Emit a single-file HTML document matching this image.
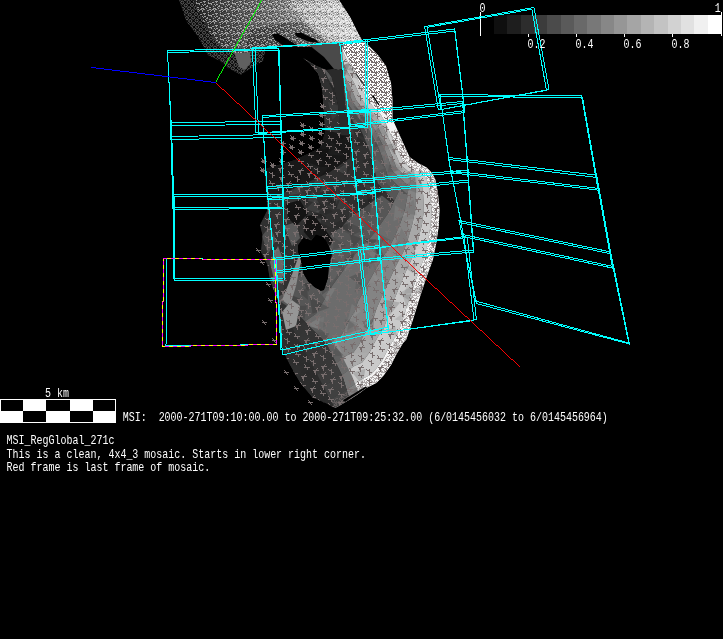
<!DOCTYPE html>
<html><head><meta charset="utf-8"><title>MSI_RegGlobal_271c</title>
<style>
html,body{margin:0;padding:0;background:#000;}
body{width:723px;height:639px;overflow:hidden;}
svg{display:block;}
.t{font-family:"Liberation Mono","DejaVu Sans Mono",monospace;font-size:10px;fill:#fff;white-space:pre;}
</style></head><body>
<svg width="723" height="639" viewBox="0 0 723 639">
<rect width="723" height="639" fill="#000"/>
<g id="asteroid">
<defs>
<pattern id="dotsd" width="4.5" height="4.5" patternUnits="userSpaceOnUse" patternTransform="rotate(40)">
<path d="M0.5 0.5h2.6v2.6h-2.6z" fill="none" stroke="#7c7c7c" stroke-width="0.9"/>
</pattern>
<linearGradient id="gtop" gradientUnits="userSpaceOnUse" x1="195" y1="32" x2="345" y2="8">
<stop offset="0" stop-color="#1e1e1e"/><stop offset="0.14" stop-color="#3c3c3c"/><stop offset="0.32" stop-color="#5a5a5a"/><stop offset="0.55" stop-color="#747474"/><stop offset="0.75" stop-color="#a2a2a2"/><stop offset="1" stop-color="#cccccc"/>
</linearGradient>
<pattern id="pw" width="10" height="10" patternUnits="userSpaceOnUse" shape-rendering="crispEdges"><path d="M3 5h1v1h-1zM4 1h1v1h-1zM4 5h1v1h-1zM0 4h1v1h-1zM7 6h1v1h-1zM1 2h1v1h-1zM0 0h1v1h-1zM6 4h1v1h-1zM4 2h1v1h-1zM1 1h1v1h-1zM8 1h1v1h-1zM3 9h1v1h-1zM0 7h1v1h-1zM4 8h1v1h-1zM7 8h1v1h-1zM1 5h1v1h-1zM5 3h1v1h-1zM6 2h1v1h-1zM0 9h1v1h-1zM5 2h1v1h-1zM6 8h1v1h-1zM5 5h1v1h-1zM6 3h1v1h-1zM6 5h1v1h-1zM6 1h1v1h-1zM6 7h1v1h-1zM9 5h1v1h-1zM1 8h1v1h-1zM5 8h1v1h-1zM8 6h1v1h-1zM9 9h1v1h-1zM9 2h1v1h-1zM1 0h1v1h-1zM1 7h1v1h-1zM7 2h1v1h-1zM2 1h1v1h-1zM1 4h1v1h-1zM4 4h1v1h-1zM3 7h1v1h-1zM9 1h1v1h-1zM2 2h1v1h-1zM5 9h1v1h-1zM8 3h1v1h-1zM3 2h1v1h-1zM2 6h1v1h-1zM9 8h1v1h-1zM4 0h1v1h-1zM2 7h1v1h-1z" fill="#786e6e" opacity="1"/></pattern>
<pattern id="pn" width="12" height="12" patternUnits="userSpaceOnUse" shape-rendering="crispEdges"><path d="M4 2h1v1h-1zM11 8h1v1h-1zM6 11h1v1h-1zM7 3h1v1h-1zM4 3h1v1h-1zM10 4h1v1h-1zM7 4h1v1h-1zM9 2h1v1h-1zM10 11h1v1h-1zM2 8h1v1h-1zM1 4h1v1h-1zM3 5h1v1h-1zM10 8h1v1h-1zM2 6h1v1h-1zM8 9h1v1h-1zM8 2h1v1h-1zM3 10h1v1h-1zM4 0h1v1h-1zM5 3h1v1h-1zM9 8h1v1h-1zM1 7h1v1h-1zM1 1h1v1h-1zM9 9h1v1h-1zM0 4h1v1h-1zM11 9h1v1h-1zM0 9h1v1h-1zM5 9h1v1h-1zM10 10h1v1h-1zM6 3h1v1h-1zM3 6h1v1h-1zM11 5h1v1h-1zM7 10h1v1h-1zM11 1h1v1h-1zM6 9h1v1h-1zM0 2h1v1h-1zM0 1h1v1h-1zM6 7h1v1h-1zM5 7h1v1h-1zM4 10h1v1h-1zM9 6h1v1h-1z" fill="#fff" opacity="0.5"/><path d="M0 7h1v1h-1zM11 0h1v1h-1zM6 6h1v1h-1zM9 11h1v1h-1zM7 6h1v1h-1zM1 2h1v1h-1zM3 9h1v1h-1zM11 7h1v1h-1zM0 6h1v1h-1zM4 5h1v1h-1zM1 0h1v1h-1zM6 0h1v1h-1zM5 1h1v1h-1zM9 3h1v1h-1zM7 7h1v1h-1zM8 11h1v1h-1zM10 5h1v1h-1zM8 3h1v1h-1zM7 11h1v1h-1zM11 4h1v1h-1zM2 4h1v1h-1zM5 2h1v1h-1zM3 4h1v1h-1zM5 11h1v1h-1zM7 2h1v1h-1zM0 8h1v1h-1zM2 1h1v1h-1zM1 6h1v1h-1zM8 8h1v1h-1zM8 1h1v1h-1z" fill="#000" opacity="0.35"/></pattern>
<pattern id="pn2" width="12" height="12" patternUnits="userSpaceOnUse" shape-rendering="crispEdges"><path d="M11 1h1v1h-1zM11 10h1v1h-1zM5 0h1v1h-1zM4 10h1v1h-1zM8 3h1v1h-1zM3 0h1v1h-1zM0 10h1v1h-1zM9 5h1v1h-1zM0 7h1v1h-1zM11 11h1v1h-1zM7 9h1v1h-1zM1 4h1v1h-1zM7 1h1v1h-1zM9 6h1v1h-1zM3 11h1v1h-1zM2 5h1v1h-1zM7 4h1v1h-1zM10 11h1v1h-1zM11 7h1v1h-1zM6 0h1v1h-1zM9 4h1v1h-1zM6 4h1v1h-1zM10 8h1v1h-1zM5 11h1v1h-1zM11 5h1v1h-1zM8 1h1v1h-1zM5 3h1v1h-1zM1 1h1v1h-1zM5 8h1v1h-1zM1 10h1v1h-1zM11 8h1v1h-1zM2 6h1v1h-1zM3 8h1v1h-1zM9 7h1v1h-1zM0 4h1v1h-1zM4 3h1v1h-1zM8 8h1v1h-1zM3 4h1v1h-1zM9 8h1v1h-1zM7 8h1v1h-1zM5 10h1v1h-1zM0 6h1v1h-1zM7 10h1v1h-1zM10 6h1v1h-1zM2 3h1v1h-1zM6 8h1v1h-1zM7 6h1v1h-1zM10 3h1v1h-1zM3 7h1v1h-1zM0 8h1v1h-1zM1 6h1v1h-1zM4 5h1v1h-1zM2 9h1v1h-1zM11 4h1v1h-1zM1 11h1v1h-1zM1 7h1v1h-1zM4 11h1v1h-1zM6 2h1v1h-1zM9 11h1v1h-1zM4 9h1v1h-1z" fill="#fff" opacity="0.8"/><path d="M2 11h1v1h-1zM6 7h1v1h-1zM3 5h1v1h-1zM0 2h1v1h-1zM1 9h1v1h-1zM9 1h1v1h-1zM0 1h1v1h-1zM11 9h1v1h-1zM2 2h1v1h-1zM1 5h1v1h-1z" fill="#000" opacity="0.3"/></pattern>
<clipPath id="cb"><polygon points="326.6,403.5 312.5,397.5 300.0,382.5 290.0,365.0 282.5,350.0 280.0,325.0 277.5,300.0 270.0,280.0 267.5,265.0 261.0,252.0 262.5,235.0 260.0,225.0 267.5,210.0 265.0,175.0 262.0,170.0 295.0,160.0 320.0,148.0 325.0,133.0 350.0,136.0 345.3,105.0 343.0,70.0 342.0,46.0 344.0,50.0 351.0,64.0 359.0,77.7 364.7,91.5 373.0,102.6 380.0,109.5 389.8,118.0 392.5,119.0 397.0,129.0 401.0,138.0 405.5,148.0 409.6,157.0 418.0,163.0 426.8,167.5 432.0,173.0 435.4,179.5 438.0,193.0 439.6,210.0 438.8,226.4 436.3,243.0 433.0,259.6 426.3,278.0 419.7,298.0 413.0,319.7 406.4,339.6 403.0,343.2 396.3,354.8 391.3,364.8 383.0,376.4 376.4,383.0 366.4,388.0 359.8,393.0 349.8,399.6 339.9,405.4 335.0,408.0"/><polygon points="303.0,58.0 309.5,63.0 318.3,73.7 321.2,84.4 322.7,92.0 323.2,105.3 324.6,116.4 325.0,133.0 332.0,134.0 331.5,116.0 330.0,105.0 329.0,92.0 327.5,80.0 323.0,71.0 316.4,66.0"/><polygon points="316.4,66.0 323.0,71.0 327.5,80.0 329.0,92.0 330.0,105.0 331.5,116.0 332.0,134.0 340.5,135.0 339.0,120.0 337.7,105.0 334.5,90.0 331.5,77.0 326.0,70.0"/></clipPath>
</defs>
<polygon points="179.0,0.0 186.6,21.6 198.0,36.5 208.0,55.0 220.0,61.0 228.0,68.0 241.0,74.7 248.0,70.0 263.0,61.0 266.0,46.5 271.0,38.0 290.0,40.0 290.0,30.0 200.0,0.0" fill="url(#dotsd)" opacity="0.8"/>
<polygon points="193.0,0.0 339.0,0.0 350.0,17.0 358.0,33.0 362.0,40.0 345.0,44.0 330.0,45.0 318.0,46.0 300.0,47.0 285.0,47.0 272.0,46.0 266.0,47.0 258.0,50.0 245.0,53.0 232.0,53.0 224.0,49.0 216.0,42.0 208.0,30.0 200.0,15.0 193.0,0.0" fill="url(#gtop)"/>
<polygon points="234.0,52.0 250.0,51.0 251.0,62.0 245.0,70.0 239.0,67.0" fill="rgb(96,96,96)"/>
<polygon points="250.0,30.0 300.0,20.0 330.0,44.0 300.0,47.0 272.0,46.0 258.0,50.0 245.0,53.0" fill="#000" opacity="0.3"/>
<polygon points="193.0,0.0 339.0,0.0 350.0,17.0 358.0,33.0 362.0,40.0 345.0,44.0 330.0,45.0 318.0,46.0 300.0,47.0 285.0,47.0 272.0,46.0 266.0,47.0 258.0,50.0 245.0,53.0 232.0,53.0 224.0,49.0 216.0,42.0 208.0,30.0 200.0,15.0 193.0,0.0" fill="url(#pn)"/>
<polygon points="285.0,0.0 339.0,0.0 350.0,17.0 358.0,33.0 362.0,40.0 345.0,44.0 330.0,38.0 310.0,25.0 295.0,12.0" fill="url(#pn2)" opacity="0.7"/>
<polygon points="294.3,33.2 301.0,32.5 316.4,40.0 319.0,43.0 308.0,41.5 297.0,36.7" fill="#000"/>
<polygon points="272.0,34.6 277.7,33.2 295.6,44.3 297.0,47.0 283.0,45.6 275.0,40.0" fill="#000"/>
<polygon points="309.5,45.0 316.0,43.5 343.0,43.0 343.0,69.0 338.0,70.0 333.8,68.8 324.0,57.0 314.0,49.0" fill="rgb(74,74,74)"/>
<polygon points="303.0,58.0 309.5,63.0 318.3,73.7 321.2,84.4 322.7,92.0 323.2,105.3 324.6,116.4 325.0,133.0 332.0,134.0 331.5,116.0 330.0,105.0 329.0,92.0 327.5,80.0 323.0,71.0 316.4,66.0" fill="rgb(104,104,104)"/>
<polygon points="316.4,66.0 323.0,71.0 327.5,80.0 329.0,92.0 330.0,105.0 331.5,116.0 332.0,134.0 340.5,135.0 339.0,120.0 337.7,105.0 334.5,90.0 331.5,77.0 326.0,70.0" fill="rgb(78,78,78)"/>
<polygon points="326.0,70.0 331.5,77.0 334.5,90.0 337.7,105.0 339.0,120.0 340.5,135.0 350.0,136.0 345.3,105.0 343.0,70.0 338.0,70.0 333.8,68.8" fill="rgb(42,42,42)"/>
<g clip-path="url(#cb)">
<polygon points="326.6,403.5 312.5,397.5 300.0,382.5 290.0,365.0 282.5,350.0 280.0,325.0 277.5,300.0 270.0,280.0 267.5,265.0 261.0,252.0 262.5,235.0 260.0,225.0 267.5,210.0 265.0,175.0 262.0,170.0 295.0,160.0 320.0,148.0 325.0,133.0 350.0,136.0 345.3,105.0 343.0,70.0 342.0,46.0 344.0,50.0 351.0,64.0 359.0,77.7 364.7,91.5 373.0,102.6 380.0,109.5 389.8,118.0 392.5,119.0 397.0,129.0 401.0,138.0 405.5,148.0 409.6,157.0 418.0,163.0 426.8,167.5 432.0,173.0 435.4,179.5 438.0,193.0 439.6,210.0 438.8,226.4 436.3,243.0 433.0,259.6 426.3,278.0 419.7,298.0 413.0,319.7 406.4,339.6 403.0,343.2 396.3,354.8 391.3,364.8 383.0,376.4 376.4,383.0 366.4,388.0 359.8,393.0 349.8,399.6 339.9,405.4 335.0,408.0" fill="rgb(46,46,46)"/>
<polygon points="314.9,47.1 320.7,63.0 329.0,79.7 336.6,92.7 343.2,107.7 354.6,123.8 360.6,129.6 362.8,134.3 366.3,142.7 370.1,151.8 372.9,162.8 377.9,183.4 394.7,201.2 399.2,206.2 390.7,202.6 382.0,195.5 371.8,202.1 358.7,211.9 349.9,217.5 342.1,226.5 334.9,231.6 323.3,242.3 308.6,262.6 294.0,281.7 291.4,290.7 298.9,274.0 286.4,295.3 284.9,299.3 286.3,297.2 304.8,280.5 301.9,280.9 288.2,290.5 283.7,293.5 278.2,296.7 276.4,297.6 194.4,143.0 191.8,144.5 191.1,145.0 188.0,147.1 211.6,131.0 204.6,137.1 150.9,186.4 135.8,207.5 132.5,211.9 153.1,177.2 130.4,222.1 127.2,228.3 133.9,206.8 142.8,179.8 144.5,177.2 140.8,191.4 140.3,196.5 139.7,217.2 140.8,233.9 148.1,265.7 188.2,347.8 252.4,411.6 261.7,419.1 179.1,349.1 132.2,271.7 127.2,260.5 123.2,251.5 125.6,255.9 148.4,291.4 149.5,294.7 110.5,238.5 98.7,213.8 94.2,206.9 75.3,168.2 63.5,136.9" fill="rgb(48,48,48)"/>
<polygon points="320.6,45.1 326.2,60.6 334.3,76.9 341.9,89.9 348.5,104.7 359.4,119.8 366.0,125.5 369.6,130.7 374.1,139.2 378.7,148.0 382.5,158.4 387.5,175.4 401.7,189.6 407.6,194.4 403.4,193.5 399.2,190.4 395.2,198.9 389.6,211.2 383.0,220.8 375.1,232.3 367.5,240.9 355.6,253.5 341.5,273.1 327.4,292.3 323.6,304.4 328.0,293.4 317.2,311.9 314.7,317.6 313.4,319.4 324.8,309.2 320.0,310.9 308.2,319.2 302.2,323.2 295.5,327.1 292.8,328.5 276.4,297.6 278.2,296.7 283.7,293.5 288.2,290.5 301.9,280.9 304.8,280.5 286.3,297.2 284.9,299.3 286.4,295.3 298.9,274.0 291.4,290.7 294.0,281.7 308.6,262.6 323.3,242.3 334.9,231.6 342.1,226.5 349.9,217.5 358.7,211.9 371.8,202.1 382.0,195.5 390.7,202.6 399.2,206.2 394.7,201.2 377.9,183.4 372.9,162.8 370.1,151.8 366.3,142.7 362.8,134.3 360.6,129.6 354.6,123.8 343.2,107.7 336.6,92.7 329.0,79.7 320.7,63.0 314.9,47.1" fill="rgb(86,86,86)"/>
<polygon points="325.3,43.4 330.8,58.7 338.7,74.5 346.4,87.7 352.8,102.3 363.2,116.6 370.0,122.5 374.1,128.5 378.7,137.2 383.2,145.9 387.5,156.2 392.5,171.2 405.6,183.3 412.3,187.8 410.5,188.4 408.6,187.5 407.2,197.2 404.7,210.8 400.6,222.6 395.1,235.8 389.4,247.1 379.8,261.9 368.8,281.8 357.8,302.1 353.0,316.9 354.7,311.1 345.3,327.2 341.9,334.4 338.1,339.7 343.2,335.5 336.5,338.3 326.6,345.5 319.1,350.4 311.3,355.0 307.8,356.8 292.8,328.5 295.5,327.1 302.2,323.2 308.2,319.2 320.0,310.9 324.8,309.2 313.4,319.4 314.7,317.6 317.2,311.9 328.0,293.4 323.6,304.4 327.4,292.3 341.5,273.1 355.6,253.5 367.5,240.9 375.1,232.3 383.0,220.8 389.6,211.2 395.2,198.9 399.2,190.4 403.4,193.5 407.6,194.4 401.7,189.6 387.5,175.4 382.5,158.4 378.7,148.0 374.1,139.2 369.6,130.7 366.0,125.5 359.4,119.8 348.5,104.7 341.9,89.9 334.3,76.9 326.2,60.6 320.6,45.1" fill="rgb(108,108,108)"/>
<polygon points="329.0,42.1 334.5,57.1 342.2,72.6 350.0,85.9 356.3,100.3 366.3,114.0 373.2,120.0 377.6,126.6 382.3,135.6 386.9,144.3 391.4,154.4 396.5,167.9 408.6,178.4 415.9,182.8 416.0,184.5 415.7,185.4 416.0,196.0 415.2,210.6 412.5,223.8 408.3,238.1 403.7,251.2 395.3,267.3 386.1,287.3 376.8,308.1 371.4,324.7 371.4,322.2 362.9,336.7 358.9,344.9 353.6,352.3 354.6,351.9 346.8,355.4 338.0,361.9 329.7,367.3 321.1,372.4 317.2,374.4 307.8,356.8 311.3,355.0 319.1,350.4 326.6,345.5 336.5,338.3 343.2,335.5 338.1,339.7 341.9,334.4 345.3,327.2 354.7,311.1 353.0,316.9 357.8,302.1 368.8,281.8 379.8,261.9 389.4,247.1 395.1,235.8 400.6,222.6 404.7,210.8 407.2,197.2 408.6,187.5 410.5,188.4 412.3,187.8 405.6,183.3 392.5,171.2 387.5,156.2 383.2,145.9 378.7,137.2 374.1,128.5 370.0,122.5 363.2,116.6 352.8,102.3 346.4,87.7 338.7,74.5 330.8,58.7 325.3,43.4" fill="rgb(132,132,132)"/>
<polygon points="333.8,40.4 339.1,55.1 346.6,70.2 354.4,83.6 360.7,97.9 370.1,110.8 377.0,117.1 381.7,124.5 386.3,133.8 390.7,142.6 395.2,152.7 400.2,164.8 411.3,173.9 419.1,178.3 420.8,181.0 421.8,183.6 423.2,195.0 423.9,210.4 421.9,224.7 418.2,239.8 413.9,254.2 406.1,271.0 397.7,291.0 389.2,312.1 383.4,329.8 382.2,329.4 374.3,342.9 370.0,351.7 363.7,360.6 362.1,362.5 353.5,366.6 345.5,372.5 336.6,378.4 327.6,383.7 323.3,385.9 317.2,374.4 321.1,372.4 329.7,367.3 338.0,361.9 346.8,355.4 354.6,351.9 353.6,352.3 358.9,344.9 362.9,336.7 371.4,322.2 371.4,324.7 376.8,308.1 386.1,287.3 395.3,267.3 403.7,251.2 408.3,238.1 412.5,223.8 415.2,210.6 416.0,196.0 415.7,185.4 416.0,184.5 415.9,182.8 408.6,178.4 396.5,167.9 391.4,154.4 386.9,144.3 382.3,135.6 377.6,126.6 373.2,120.0 366.3,114.0 356.3,100.3 350.0,85.9 342.2,72.6 334.5,57.1 329.0,42.1" fill="rgb(168,168,168)"/>
<polygon points="338.5,38.7 343.6,53.2 351.0,67.8 358.9,81.3 365.0,95.4 373.9,107.7 380.6,114.3 385.4,122.7 389.7,132.3 393.7,141.3 398.2,151.3 403.5,162.1 413.8,169.8 422.2,174.0 425.5,177.7 427.7,181.8 430.1,194.1 431.6,210.2 430.6,225.6 427.9,241.5 424.5,257.2 417.6,275.0 410.6,295.1 403.5,316.7 397.2,335.7 394.7,337.7 387.5,350.0 382.8,359.6 375.3,370.1 370.7,374.8 361.2,379.4 354.1,384.8 344.5,391.1 335.0,396.7 330.3,399.2 323.3,385.9 327.6,383.7 336.6,378.4 345.5,372.5 353.5,366.6 362.1,362.5 363.7,360.6 370.0,351.7 374.3,342.9 382.2,329.4 383.4,329.8 389.2,312.1 397.7,291.0 406.1,271.0 413.9,254.2 418.2,239.8 421.9,224.7 423.9,210.4 423.2,195.0 421.8,183.6 420.8,181.0 419.1,178.3 411.3,173.9 400.2,164.8 395.2,152.7 390.7,142.6 386.3,133.8 381.7,124.5 377.0,117.1 370.1,110.8 360.7,97.9 354.4,83.6 346.6,70.2 339.1,55.1 333.8,40.4" fill="rgb(202,202,202)"/>
<polygon points="346.5,35.8 351.5,49.8 358.4,63.8 366.4,77.5 372.4,91.3 380.4,102.3 387.4,109.2 392.9,118.8 397.5,128.8 401.5,137.8 406.0,147.8 410.0,156.7 418.3,162.6 427.1,167.1 432.4,172.7 435.9,179.4 438.5,192.9 440.1,210.0 439.3,226.4 436.8,243.1 433.5,259.7 426.8,278.2 420.2,298.2 413.5,319.9 406.9,339.8 403.4,343.5 396.7,355.0 391.7,365.1 383.4,376.7 376.7,383.4 366.7,388.4 360.1,393.4 350.1,400.0 340.1,405.8 335.2,408.4 330.3,399.2 335.0,396.7 344.5,391.1 354.1,384.8 361.2,379.4 370.7,374.8 375.3,370.1 382.8,359.6 387.5,350.0 394.7,337.7 397.2,335.7 403.5,316.7 410.6,295.1 417.6,275.0 424.5,257.2 427.9,241.5 430.6,225.6 431.6,210.2 430.1,194.1 427.7,181.8 425.5,177.7 422.2,174.0 413.8,169.8 403.5,162.1 398.2,151.3 393.7,141.3 389.7,132.3 385.4,122.7 380.6,114.3 373.9,107.7 365.0,95.4 358.9,81.3 351.0,67.8 343.6,53.2 338.5,38.7" fill="rgb(243,243,243)"/>
<polygon points="329.9,257.5 340.9,245.8 346.6,265.2" fill="#fff" opacity="0.05"/>
<polygon points="282.0,349.0 267.0,349.4 269.7,335.8" fill="#000" opacity="0.06"/>
<polygon points="286.7,144.4 294.5,139.0 296.8,149.7" fill="#fff" opacity="0.05"/>
<polygon points="435.5,399.5 449.7,407.6 431.0,416.3" fill="#000" opacity="0.11"/>
<polygon points="431.9,362.3 427.6,355.4 435.0,352.8" fill="#000" opacity="0.09"/>
<polygon points="271.1,165.7 284.3,178.8 263.3,183.6" fill="#000" opacity="0.12"/>
<polygon points="287.2,311.2 298.9,314.0 288.1,321.6" fill="#fff" opacity="0.08"/>
<polygon points="287.7,188.1 305.9,194.5 290.7,208.0" fill="#fff" opacity="0.03"/>
<polygon points="268.2,259.9 281.6,261.0 273.2,270.6" fill="#fff" opacity="0.04"/>
<polygon points="424.7,353.5 416.1,342.7 429.3,340.9" fill="#fff" opacity="0.04"/>
<polygon points="261.7,389.7 271.9,397.5 261.6,401.2" fill="#fff" opacity="0.04"/>
<polygon points="355.3,367.4 351.2,353.8 368.2,352.6" fill="#fff" opacity="0.05"/>
<polygon points="369.6,101.9 362.2,113.8 354.3,106.1" fill="#fff" opacity="0.08"/>
<polygon points="381.5,391.7 391.3,398.2 385.6,402.7" fill="#000" opacity="0.19"/>
<polygon points="400.1,302.5 389.1,315.9 383.2,299.5" fill="#000" opacity="0.14"/>
<polygon points="363.4,187.5 380.7,193.3 368.8,202.7" fill="#000" opacity="0.14"/>
<polygon points="335.8,347.0 343.8,355.4 332.2,356.6" fill="#000" opacity="0.19"/>
<polygon points="299.8,58.3 311.5,65.4 300.6,68.6" fill="#fff" opacity="0.07"/>
<polygon points="303.9,204.9 293.6,220.7 284.3,206.0" fill="#000" opacity="0.18"/>
<polygon points="391.3,398.2 380.2,392.9 391.8,386.1" fill="#fff" opacity="0.08"/>
<polygon points="442.3,217.3 431.8,222.9 433.8,212.0" fill="#fff" opacity="0.04"/>
<polygon points="344.4,77.8 332.1,64.7 349.7,64.0" fill="#000" opacity="0.19"/>
<polygon points="388.8,137.2 374.5,131.3 386.0,122.3" fill="#000" opacity="0.13"/>
<polygon points="374.3,316.7 373.2,331.2 363.1,327.0" fill="#000" opacity="0.19"/>
<polygon points="332.9,249.1 332.7,264.8 316.2,258.8" fill="#000" opacity="0.16"/>
<polygon points="307.7,376.0 294.3,383.3 292.8,367.3" fill="#fff" opacity="0.06"/>
<polygon points="365.8,327.5 351.3,336.5 354.3,320.5" fill="#fff" opacity="0.04"/>
<polygon points="351.8,303.8 361.0,311.3 347.6,321.1" fill="#fff" opacity="0.07"/>
<polygon points="364.3,240.1 383.7,239.5 378.1,253.1" fill="#000" opacity="0.13"/>
<polygon points="353.7,133.4 369.2,123.0 367.1,138.7" fill="#000" opacity="0.12"/>
<polygon points="375.2,84.8 382.0,74.4 392.3,86.9" fill="#000" opacity="0.19"/>
<polygon points="341.5,168.0 351.7,166.6 344.9,178.0" fill="#000" opacity="0.10"/>
<polygon points="320.0,270.4 329.1,278.0 317.4,281.1" fill="#fff" opacity="0.05"/>
<polygon points="350.2,110.6 361.4,115.0 350.5,122.9" fill="#000" opacity="0.17"/>
<polygon points="428.0,169.9 419.7,177.9 415.2,165.4" fill="#fff" opacity="0.04"/>
<polygon points="417.0,215.6 401.5,212.3 413.5,199.3" fill="#000" opacity="0.07"/>
<polygon points="344.9,319.1 358.4,323.2 344.7,332.1" fill="#000" opacity="0.07"/>
<polygon points="301.4,127.5 290.4,138.3 285.7,121.9" fill="#fff" opacity="0.06"/>
<polygon points="360.5,213.7 348.7,218.1 349.6,202.7" fill="#fff" opacity="0.04"/>
<polygon points="356.2,56.8 357.4,72.7 340.9,67.4" fill="#000" opacity="0.17"/>
<polygon points="309.0,369.3 310.1,387.2 295.5,380.3" fill="#000" opacity="0.11"/>
<polygon points="383.1,87.1 392.8,77.7 395.7,91.9" fill="#000" opacity="0.10"/>
<polygon points="369.8,264.1 378.0,250.7 384.5,259.1" fill="#000" opacity="0.16"/>
<polygon points="307.4,205.5 298.5,197.5 308.9,195.8" fill="#000" opacity="0.14"/>
<polygon points="447.6,289.7 433.1,285.5 436.0,273.3" fill="#fff" opacity="0.06"/>
<polygon points="359.7,84.9 368.3,69.9 377.6,86.5" fill="#fff" opacity="0.07"/>
<polygon points="319.1,68.2 307.2,68.1 311.5,59.0" fill="#000" opacity="0.19"/>
<polygon points="263.5,379.7 274.6,370.9 275.2,383.2" fill="#000" opacity="0.17"/>
<polygon points="359.9,105.7 370.3,91.2 374.7,107.4" fill="#fff" opacity="0.05"/>
<polygon points="355.8,201.6 371.7,198.2 369.9,216.7" fill="#000" opacity="0.14"/>
<polygon points="315.0,150.4 331.9,147.7 326.3,164.1" fill="#000" opacity="0.18"/>
<polygon points="258.3,86.5 265.8,74.2 272.3,86.1" fill="#000" opacity="0.14"/>
<polygon points="320.9,232.1 320.9,222.4 332.6,228.6" fill="#000" opacity="0.08"/>
<polygon points="327.6,154.5 331.0,140.6 344.4,155.7" fill="#fff" opacity="0.05"/>
<polygon points="281.0,369.4 269.7,370.4 277.0,360.3" fill="#fff" opacity="0.07"/>
<polygon points="268.0,158.6 282.5,169.7 267.5,175.2" fill="#000" opacity="0.14"/>
<polygon points="414.7,394.5 425.0,378.4 430.8,397.7" fill="#fff" opacity="0.05"/>
<polygon points="319.9,192.0 325.0,179.3 331.1,190.2" fill="#fff" opacity="0.08"/>
<polygon points="412.3,157.6 423.4,154.0 419.4,162.9" fill="#000" opacity="0.17"/>
<polygon points="278.8,83.7 277.0,98.2 264.9,86.6" fill="#fff" opacity="0.08"/>
<polygon points="346.5,333.8 349.1,320.5 360.7,329.2" fill="#000" opacity="0.11"/>
<polygon points="414.3,285.3 411.7,301.9 398.2,293.4" fill="#000" opacity="0.11"/>
<polygon points="344.1,108.1 332.3,120.1 327.9,101.7" fill="#fff" opacity="0.05"/>
<polygon points="285.9,295.6 269.1,282.9 281.2,277.3" fill="#fff" opacity="0.04"/>
<polygon points="304.5,319.5 291.9,306.2 306.8,305.6" fill="#000" opacity="0.12"/>
<polygon points="299.3,376.8 300.5,362.5 315.5,374.8" fill="#000" opacity="0.11"/>
<polygon points="361.4,238.6 353.5,247.2 349.3,233.6" fill="#000" opacity="0.14"/>
<polygon points="284.0,122.5 280.8,108.6 292.7,111.7" fill="#fff" opacity="0.08"/>
<polygon points="259.5,337.6 262.4,353.7 248.1,348.5" fill="#000" opacity="0.14"/>
<polygon points="404.3,173.7 416.6,156.6 422.5,171.4" fill="#fff" opacity="0.08"/>
<polygon points="312.6,174.3 310.1,163.3 320.3,167.1" fill="#fff" opacity="0.09"/>
<polygon points="404.0,293.9 407.8,283.1 415.0,292.6" fill="#000" opacity="0.08"/>
<polygon points="362.3,160.7 375.1,156.8 373.7,168.5" fill="#000" opacity="0.10"/>
<polygon points="423.3,266.4 423.0,250.7 439.5,258.5" fill="#fff" opacity="0.05"/>
<polygon points="413.0,273.3 404.2,267.2 416.4,263.2" fill="#000" opacity="0.15"/>
<polygon points="394.2,355.3 393.0,340.0 405.0,349.1" fill="#000" opacity="0.14"/>
<polygon points="255.2,170.1 269.1,176.9 256.5,182.6" fill="#fff" opacity="0.08"/>
<polygon points="414.9,250.5 428.5,245.2 425.0,259.4" fill="#fff" opacity="0.09"/>
<polygon points="372.0,135.6 366.1,124.5 377.2,125.7" fill="#fff" opacity="0.09"/>
<polygon points="274.8,374.7 290.9,374.1 281.7,385.1" fill="#fff" opacity="0.08"/>
<polygon points="305.1,372.4 316.7,368.2 313.6,380.8" fill="#000" opacity="0.19"/>
<polygon points="376.2,158.3 385.0,168.2 371.6,173.2" fill="#fff" opacity="0.05"/>
<polygon points="360.5,129.4 355.2,118.8 369.9,115.1" fill="#000" opacity="0.14"/>
<polygon points="341.9,195.0 352.6,208.7 336.2,209.3" fill="#fff" opacity="0.06"/>
<polygon points="352.4,372.8 365.4,368.7 362.6,385.5" fill="#000" opacity="0.14"/>
<polygon points="403.7,170.1 387.5,172.4 391.0,157.7" fill="#000" opacity="0.09"/>
<polygon points="319.0,203.6 307.4,200.7 312.6,191.3" fill="#fff" opacity="0.07"/>
<polygon points="360.9,370.0 363.8,378.7 355.3,378.8" fill="#fff" opacity="0.03"/>
<polygon points="415.5,353.0 415.4,337.4 428.9,346.5" fill="#000" opacity="0.20"/>
<polygon points="351.4,127.3 341.8,139.7 337.6,130.1" fill="#000" opacity="0.20"/>
<polygon points="297.8,275.2 295.1,287.8 289.1,277.5" fill="#000" opacity="0.07"/>
<polygon points="392.6,391.0 377.0,394.1 382.4,380.2" fill="#000" opacity="0.17"/>
<polygon points="316.0,287.6 336.1,288.1 327.2,302.0" fill="#fff" opacity="0.09"/>
<polygon points="346.2,245.9 333.2,249.2 333.5,237.0" fill="#000" opacity="0.09"/>
<polygon points="315.5,245.9 309.9,258.7 302.2,247.1" fill="#fff" opacity="0.04"/>
<polygon points="356.5,279.1 367.0,287.5 354.7,292.6" fill="#000" opacity="0.08"/>
<polygon points="401.2,126.8 392.8,112.2 406.0,112.5" fill="#fff" opacity="0.06"/>
<polygon points="347.3,63.4 357.8,72.6 345.0,78.5" fill="#fff" opacity="0.06"/>
<polygon points="311.4,336.2 304.8,345.6 299.6,337.5" fill="#fff" opacity="0.05"/>
<polygon points="363.9,238.6 376.4,239.3 372.8,251.1" fill="#000" opacity="0.17"/>
<polygon points="267.8,210.3 261.7,199.8 276.5,197.1" fill="#fff" opacity="0.07"/>
<polygon points="272.4,151.2 254.9,149.2 265.1,136.7" fill="#000" opacity="0.16"/>
<polygon points="300.6,157.0 291.6,145.7 308.4,144.5" fill="#fff" opacity="0.05"/>
<polygon points="375.8,73.1 383.1,81.6 371.8,84.8" fill="#fff" opacity="0.08"/>
<polygon points="290.3,181.1 301.1,176.8 299.7,188.3" fill="#000" opacity="0.15"/>
<polygon points="421.5,134.3 409.3,138.2 412.5,123.9" fill="#fff" opacity="0.09"/>
<polygon points="390.1,159.9 380.4,153.3 393.6,146.2" fill="#fff" opacity="0.05"/>
<polygon points="274.2,361.4 279.6,372.1 267.6,373.6" fill="#000" opacity="0.05"/>
<polygon points="319.4,213.8 306.1,208.9 315.3,199.7" fill="#fff" opacity="0.07"/>
<polygon points="335.0,205.2 321.5,195.2 336.9,189.7" fill="#000" opacity="0.17"/>
<polygon points="442.5,161.1 434.2,173.0 429.3,161.3" fill="#000" opacity="0.06"/>
<polygon points="331.8,201.6 333.5,191.8 342.0,199.2" fill="#fff" opacity="0.07"/>
<polygon points="296.1,95.7 303.1,84.9 307.4,93.9" fill="#fff" opacity="0.05"/>
<polygon points="263.2,201.9 271.6,195.5 274.5,206.4" fill="#000" opacity="0.13"/>
<polygon points="298.8,292.6 307.2,287.4 308.1,299.9" fill="#000" opacity="0.14"/>
<polygon points="338.1,198.7 334.4,209.9 325.8,205.6" fill="#fff" opacity="0.05"/>
<polygon points="435.7,119.0 428.8,109.6 440.9,107.1" fill="#fff" opacity="0.07"/>
<polygon points="364.6,270.3 363.2,287.1 349.1,277.2" fill="#000" opacity="0.15"/>
<polygon points="428.5,343.6 439.7,345.5 430.5,355.1" fill="#fff" opacity="0.04"/>
<polygon points="324.9,125.9 310.0,123.0 316.8,113.9" fill="#000" opacity="0.12"/>
<polygon points="297.8,366.7 278.4,370.6 287.4,353.6" fill="#000" opacity="0.10"/>
<polygon points="324.1,316.5 322.6,334.9 308.8,323.6" fill="#fff" opacity="0.05"/>
<polygon points="386.7,143.8 374.1,147.4 377.9,134.8" fill="#000" opacity="0.11"/>
<polygon points="424.7,400.9 434.1,409.0 422.0,411.5" fill="#fff" opacity="0.03"/>
<polygon points="352.2,235.4 350.8,223.4 364.6,229.5" fill="#000" opacity="0.11"/>
<polygon points="392.2,256.8 374.6,254.3 388.1,241.1" fill="#fff" opacity="0.03"/>
<polygon points="361.6,119.3 353.3,106.0 367.8,104.2" fill="#000" opacity="0.10"/>
<polygon points="280.4,126.2 268.3,131.5 269.8,117.1" fill="#fff" opacity="0.06"/>
<polygon points="384.9,278.1 376.9,284.8 372.6,275.2" fill="#fff" opacity="0.04"/>
<polygon points="278.6,78.3 287.3,88.5 271.9,92.2" fill="#000" opacity="0.17"/>
<polygon points="406.7,310.6 404.8,321.5 394.3,319.5" fill="#000" opacity="0.09"/>
<polygon points="425.6,76.8 415.8,63.0 429.9,63.5" fill="#fff" opacity="0.05"/>
<polygon points="418.4,178.7 420.7,166.8 429.1,171.0" fill="#fff" opacity="0.04"/>
<polygon points="315.7,211.5 325.0,207.0 325.9,216.7" fill="#fff" opacity="0.08"/>
<polygon points="285.0,403.2 274.2,413.8 271.1,399.0" fill="#000" opacity="0.10"/>
<polygon points="296.9,193.1 280.4,188.7 296.6,176.8" fill="#000" opacity="0.14"/>
<polygon points="354.1,253.0 352.2,264.3 343.3,260.0" fill="#000" opacity="0.14"/>
<polygon points="342.9,73.6 356.4,62.2 358.8,79.4" fill="#000" opacity="0.10"/>
<polygon points="395.5,402.9 394.6,413.2 385.0,403.7" fill="#000" opacity="0.17"/>
<polygon points="411.5,245.0 395.9,243.3 401.5,228.1" fill="#000" opacity="0.08"/>
<polygon points="303.5,283.2 312.8,282.5 308.2,291.7" fill="#000" opacity="0.19"/>
<polygon points="410.6,116.9 395.2,114.3 401.5,105.4" fill="#fff" opacity="0.08"/>
<polygon points="376.4,375.8 366.0,380.8 365.6,369.9" fill="#fff" opacity="0.03"/>
<polygon points="317.4,179.0 311.6,166.8 328.8,167.0" fill="#fff" opacity="0.04"/>
<polygon points="428.8,281.2 422.0,272.9 433.4,267.2" fill="#fff" opacity="0.07"/>
<polygon points="327.5,346.4 336.3,339.7 342.1,353.0" fill="#fff" opacity="0.08"/>
<polygon points="300.8,362.5 314.1,350.2 317.2,362.8" fill="#fff" opacity="0.05"/>
<polygon points="336.7,387.7 345.7,393.2 331.9,400.6" fill="#fff" opacity="0.05"/>
<polygon points="398.4,352.5 411.5,350.8 410.3,366.5" fill="#000" opacity="0.10"/>
<polygon points="417.2,388.3 427.4,390.2 418.8,398.0" fill="#000" opacity="0.20"/>
<polygon points="434.1,188.4 447.8,196.9 435.3,207.0" fill="#fff" opacity="0.09"/>
<polygon points="290.1,195.1 293.5,182.8 302.1,193.1" fill="#fff" opacity="0.08"/>
<polygon points="385.5,331.0 395.2,326.3 396.9,336.0" fill="#000" opacity="0.13"/>
<polygon points="271.0,335.5 280.3,328.9 281.6,342.2" fill="#000" opacity="0.09"/>
<polygon points="326.5,81.3 336.7,71.9 337.0,82.2" fill="#000" opacity="0.13"/>
<polygon points="341.8,268.3 331.8,283.1 326.5,265.7" fill="#fff" opacity="0.06"/>
<polygon points="270.7,99.1 263.6,105.9 256.6,94.1" fill="#fff" opacity="0.09"/>
<polygon points="326.5,225.5 319.6,240.3 308.9,229.5" fill="#000" opacity="0.09"/>
<polygon points="320.0,217.0 319.4,201.9 333.2,211.7" fill="#000" opacity="0.11"/>
<polygon points="295.5,102.4 295.2,88.5 305.4,93.2" fill="#000" opacity="0.05"/>
<polygon points="359.2,392.8 373.4,393.5 366.4,404.1" fill="#000" opacity="0.16"/>
<polygon points="265.1,99.7 263.4,88.6 273.8,90.7" fill="#fff" opacity="0.09"/>
<polygon points="414.0,168.4 415.6,181.9 402.5,174.8" fill="#000" opacity="0.19"/>
<polygon points="375.1,57.9 382.2,72.7 364.3,69.1" fill="#000" opacity="0.06"/>
<polygon points="393.5,221.3 395.1,205.2 408.9,213.6" fill="#fff" opacity="0.08"/>
<polygon points="384.7,257.7 372.9,251.6 379.2,245.4" fill="#000" opacity="0.18"/>
<polygon points="288.7,366.6 274.1,369.9 277.7,357.6" fill="#fff" opacity="0.08"/>
<polygon points="270.6,317.1 282.0,315.8 276.6,326.6" fill="#fff" opacity="0.06"/>
<polygon points="402.7,187.7 416.0,176.6 417.9,193.4" fill="#000" opacity="0.09"/>
<polygon points="267.6,340.9 277.1,353.7 262.4,354.2" fill="#fff" opacity="0.04"/>
<polygon points="396.9,90.4 397.9,102.8 387.5,97.2" fill="#000" opacity="0.16"/>
<polygon points="408.9,104.0 395.6,94.0 413.3,88.1" fill="#000" opacity="0.19"/>
<polygon points="379.6,176.7 392.8,188.9 377.0,197.0" fill="#000" opacity="0.09"/>
<polygon points="304.9,150.3 313.0,142.5 313.4,152.7" fill="#000" opacity="0.18"/>
<polygon points="359.8,245.3 376.8,242.1 374.9,260.0" fill="#fff" opacity="0.08"/>
<polygon points="302.2,210.7 307.6,220.6 295.4,220.8" fill="#fff" opacity="0.09"/>
<polygon points="385.7,88.6 367.1,90.7 381.8,74.9" fill="#000" opacity="0.06"/>
<polygon points="262.1,249.1 274.2,257.4 256.7,269.9" fill="#000" opacity="0.10"/>
<polygon points="340.6,136.3 348.8,119.6 354.7,134.3" fill="#fff" opacity="0.05"/>
<polygon points="329.5,307.7 312.5,313.8 309.8,297.4" fill="#000" opacity="0.15"/>
<polygon points="378.6,283.0 362.7,282.4 372.8,264.7" fill="#fff" opacity="0.03"/>
<polygon points="402.5,295.1 414.1,294.3 407.2,309.0" fill="#000" opacity="0.11"/>
<polygon points="318.7,175.4 323.8,184.4 313.2,183.9" fill="#fff" opacity="0.08"/>
<polygon points="282.7,114.4 291.3,106.2 295.4,118.3" fill="#fff" opacity="0.08"/>
<polygon points="286.9,147.3 289.3,134.7 298.6,142.7" fill="#fff" opacity="0.04"/>
<polygon points="326.8,410.3 329.9,400.3 340.7,409.3" fill="#fff" opacity="0.08"/>
<polygon points="326.4,151.7 336.0,164.5 320.1,167.6" fill="#000" opacity="0.07"/>
<polygon points="304.6,366.4 297.5,377.8 289.3,363.4" fill="#fff" opacity="0.07"/>
<polygon points="408.7,320.3 419.2,305.3 428.5,319.5" fill="#fff" opacity="0.03"/>
<polygon points="307.4,122.5 319.1,119.0 313.9,129.1" fill="#fff" opacity="0.03"/>
<polygon points="304.0,327.4 320.3,316.4 317.1,336.8" fill="#fff" opacity="0.07"/>
<polygon points="418.9,218.1 409.4,229.7 405.4,219.9" fill="#fff" opacity="0.07"/>
<polygon points="298.7,60.4 301.4,70.7 290.7,69.4" fill="#fff" opacity="0.05"/>
<polygon points="363.9,184.1 379.0,187.6 369.1,197.3" fill="#fff" opacity="0.05"/>
<polygon points="433.0,131.7 428.4,152.3 413.6,143.2" fill="#000" opacity="0.09"/>
<polygon points="365.4,125.2 355.4,107.6 374.4,115.5" fill="#000" opacity="0.11"/>
<polygon points="252.1,230.7 262.8,229.7 258.8,241.1" fill="#000" opacity="0.09"/>
<polygon points="336.9,99.5 328.8,82.8 346.7,83.3" fill="#000" opacity="0.19"/>
<polygon points="351.2,222.1 352.1,234.5 340.1,226.6" fill="#000" opacity="0.19"/>
<polygon points="388.2,329.6 386.6,345.5 373.7,337.3" fill="#fff" opacity="0.06"/>
<polygon points="329.3,333.2 323.8,346.1 311.5,330.2" fill="#000" opacity="0.10"/>
<polygon points="301.6,299.2 286.2,312.7 288.7,294.0" fill="#000" opacity="0.18"/>
<polygon points="352.5,391.7 362.4,381.2 364.6,396.7" fill="#000" opacity="0.17"/>
<polygon points="385.2,247.9 379.2,234.1 391.0,240.2" fill="#000" opacity="0.09"/>
<polygon points="431.5,266.0 439.6,283.5 423.3,277.7" fill="#000" opacity="0.12"/>
<polygon points="386.8,144.9 398.0,142.0 394.4,154.4" fill="#000" opacity="0.15"/>
<polygon points="326.4,205.6 335.6,196.1 336.7,208.1" fill="#000" opacity="0.19"/>
<polygon points="431.0,145.6 416.5,156.5 415.9,140.3" fill="#fff" opacity="0.07"/>
<polygon points="385.8,164.1 400.0,167.6 386.6,178.8" fill="#000" opacity="0.06"/>
<polygon points="263.6,158.4 272.7,145.3 278.9,160.9" fill="#000" opacity="0.14"/>
<polygon points="272.7,308.4 263.1,313.4 265.1,302.8" fill="#000" opacity="0.18"/>
<polygon points="353.5,263.8 345.1,271.5 342.2,259.9" fill="#fff" opacity="0.08"/>
<polygon points="296.2,340.4 306.4,327.4 311.4,342.7" fill="#fff" opacity="0.08"/>
<polygon points="331.2,225.4 346.9,216.5 348.9,233.9" fill="#000" opacity="0.09"/>
<polygon points="384.8,383.8 398.9,394.5 384.8,398.0" fill="#fff" opacity="0.07"/>
<polygon points="259.6,215.3 252.4,197.5 268.5,204.3" fill="#fff" opacity="0.06"/>
<polygon points="401.6,347.5 415.1,349.8 408.7,360.9" fill="#000" opacity="0.13"/>
<polygon points="431.6,114.5 430.8,99.2 447.5,107.2" fill="#fff" opacity="0.07"/>
<polygon points="422.7,284.7 424.9,297.7 413.2,290.5" fill="#000" opacity="0.19"/>
<polygon points="319.3,331.3 319.3,321.3 328.1,323.6" fill="#000" opacity="0.05"/>
<polygon points="321.9,295.1 321.0,286.0 332.2,287.0" fill="#000" opacity="0.16"/>
<polygon points="314.7,235.4 301.8,237.4 304.3,222.8" fill="#000" opacity="0.08"/>
<polygon points="347.8,162.5 346.4,175.0 336.6,170.1" fill="#fff" opacity="0.09"/>
<polygon points="326.1,207.4 326.1,220.4 312.0,216.1" fill="#000" opacity="0.18"/>
<polygon points="295.4,180.4 306.4,191.5 293.7,191.9" fill="#fff" opacity="0.03"/>
<polygon points="325.4,396.3 328.2,413.5 313.3,404.7" fill="#000" opacity="0.15"/>
<polygon points="309.5,221.6 321.5,218.1 319.1,230.0" fill="#fff" opacity="0.07"/>
<polygon points="296.8,103.0 313.0,90.7 312.8,108.0" fill="#000" opacity="0.13"/>
<polygon points="324.8,197.9 337.7,189.7 340.1,200.3" fill="#fff" opacity="0.03"/>
<polygon points="403.5,284.5 395.8,274.9 408.6,271.2" fill="#fff" opacity="0.06"/>
<polygon points="420.3,397.0 419.7,416.4 407.7,408.5" fill="#000" opacity="0.13"/>
<polygon points="449.0,86.4 431.0,96.9 434.1,75.5" fill="#fff" opacity="0.08"/>
<polygon points="358.9,264.4 366.2,257.2 370.2,268.2" fill="#000" opacity="0.14"/>
<polygon points="266.2,146.3 252.1,131.3 268.3,128.9" fill="#000" opacity="0.09"/>
<polygon points="416.0,319.0 400.7,321.3 401.2,304.6" fill="#fff" opacity="0.09"/>
<polygon points="319.5,160.4 307.4,153.3 322.9,142.1" fill="#000" opacity="0.09"/>
<polygon points="395.9,121.7 382.9,132.4 380.7,120.1" fill="#fff" opacity="0.05"/>
<polygon points="407.4,296.2 422.4,305.3 409.7,314.6" fill="#fff" opacity="0.06"/>
<polygon points="260.5,79.5 264.6,58.9 277.8,72.3" fill="#fff" opacity="0.08"/>
<polygon points="357.5,136.7 367.8,144.4 355.6,146.4" fill="#000" opacity="0.16"/>
<polygon points="351.0,402.0 343.0,376.0 335.0,360.0 326.6,343.0 310.0,326.6 296.0,312.0 278.0,300.0 270.0,330.0 280.0,365.0 300.0,392.0 326.0,406.0 335.0,410.0" fill="rgb(44,44,44)" opacity="0.88"/>
<polygon points="351.0,402.0 343.0,376.0 335.0,360.0 326.6,343.0 310.0,326.6 322.0,330.0 340.0,352.0 352.0,376.0 360.0,396.0" fill="rgb(80,80,80)" opacity="0.7"/>
<polygon points="255.0,165.0 295.0,158.0 322.0,146.0 324.0,130.0 352.0,136.0 350.0,158.0 330.0,172.0 300.0,186.0 266.0,200.0" fill="#000" opacity="0.5"/>
<polygon points="282.0,300.0 290.0,280.0 298.0,258.0 306.0,244.0 300.0,266.0 296.0,286.0 290.0,306.0" fill="rgb(140,140,140)"/>
<polygon points="270.0,262.0 278.0,246.0 284.0,262.0 282.0,284.0 274.0,280.0" fill="rgb(105,105,105)"/>
<polygon points="282.0,312.0 292.0,300.0 300.0,306.0 296.0,326.0 286.0,330.0" fill="rgb(150,150,150)"/>
<polygon points="262.0,236.0 270.0,226.0 276.0,240.0 268.0,254.0" fill="rgb(80,80,80)"/>
<polygon points="284.0,226.0 296.0,222.0 300.0,238.0 292.0,246.0" fill="rgb(90,90,90)"/>
<polygon points="306.0,216.0 314.0,215.0 333.0,240.0 330.0,246.0 322.0,238.0 316.0,235.0 311.0,240.0 304.0,232.0" fill="rgb(20,20,20)"/>
<polygon points="286.0,204.0 300.0,200.0 308.0,214.0 296.0,226.0 288.0,218.0" fill="rgb(20,20,20)"/>
<polygon points="298.0,245.4 303.5,237.6 311.3,240.7 316.0,234.7 323.9,237.6 328.6,245.4 331.7,254.8 330.0,262.6 328.6,268.9 327.8,278.2 323.9,290.0 320.7,290.8 314.5,286.9 308.2,281.4 303.5,273.6 302.0,265.7 300.4,257.9 298.0,251.6" fill="#000"/>
<path d="M252.5 409.5h6M255.5 409.5v4M257.5 407.5l-4 5M256.5 397.5v6M253.5 398.5l6 4M265.5 400.5v6M262.5 401.5l6 4M271.5 409.5h6M272.5 406.5l4 6M255.5 390.5h6M256.5 387.5l4 6M263.5 394.5h6M266.5 394.5v4M268.5 392.5l-4 5M271.5 399.5h6M274.5 399.5v4M276.5 397.5l-4 5M281.5 402.5h6M284.5 402.5v4M286.5 400.5l-4 5M292.5 405.5v6M289.5 406.5l6 4M253.5 381.5h6M254.5 378.5l4 6M263.5 386.5h6M266.5 386.5v4M268.5 384.5l-4 5M272.5 388.5h6M275.5 388.5v4M277.5 386.5l-4 5M281.5 394.5h6M282.5 391.5l4 6M290.5 398.5h6M291.5 395.5l4 6M298.5 403.5h6M299.5 400.5l4 6M312.5 405.5v6M309.5 406.5l6 4M317.5 411.5h6M320.5 411.5v4M322.5 409.5l-4 5M255.5 372.5h6M256.5 369.5l4 6M263.5 377.5h6M266.5 377.5v4M268.5 375.5l-4 5M273.5 381.5h6M276.5 381.5v4M278.5 379.5l-4 5M282.5 386.5h6M285.5 386.5v4M287.5 384.5l-4 5M293.5 387.5v6M290.5 388.5l6 4M301.5 394.5h6M302.5 391.5l4 6M309.5 397.5h6M312.5 397.5v4M314.5 395.5l-4 5M317.5 402.5h6M318.5 399.5l4 6M327.5 406.5h6M328.5 403.5l4 6M255.5 362.5h6M258.5 362.5v4M260.5 360.5l-4 5M264.5 368.5h6M265.5 365.5l4 6M277.5 369.5v6M274.5 370.5l6 4M282.5 375.5h6M285.5 375.5v4M287.5 373.5l-4 5M291.5 381.5h6M292.5 378.5l4 6M299.5 385.5h6M300.5 382.5l4 6M309.5 388.5h6M312.5 388.5v4M314.5 386.5l-4 5M319.5 393.5h6M320.5 390.5l4 6M327.5 399.5h6M328.5 396.5l4 6M337.5 402.5h6M340.5 402.5v4M342.5 400.5l-4 5M346.5 406.5h6M347.5 403.5l4 6M357.5 408.5v6M354.5 409.5l6 4M255.5 355.5h6M256.5 352.5l4 6M266.5 359.5h6M267.5 356.5l4 6M273.5 361.5h6M276.5 361.5v4M278.5 359.5l-4 5M283.5 366.5h6M286.5 366.5v4M288.5 364.5l-4 5M291.5 373.5h6M292.5 370.5l4 6M300.5 376.5h6M303.5 376.5v4M305.5 374.5l-4 5M311.5 381.5h6M312.5 378.5l4 6M320.5 385.5h6M323.5 385.5v4M325.5 383.5l-4 5M327.5 389.5h6M330.5 389.5v4M332.5 387.5l-4 5M337.5 394.5h6M338.5 391.5l4 6M346.5 398.5h6M349.5 398.5v4M351.5 396.5l-4 5M355.5 403.5h6M356.5 400.5l4 6M364.5 406.5h6M367.5 406.5v4M369.5 404.5l-4 5M259.5 341.5v6M256.5 342.5l6 4M270.5 347.5v6M267.5 348.5l6 4M277.5 351.5v6M274.5 352.5l6 4M282.5 358.5h6M283.5 355.5l4 6M292.5 362.5h6M293.5 359.5l4 6M303.5 367.5h6M304.5 364.5l4 6M312.5 370.5h6M315.5 370.5v4M317.5 368.5l-4 5M320.5 374.5h6M323.5 374.5v4M325.5 372.5l-4 5M329.5 379.5h6M332.5 379.5v4M334.5 377.5l-4 5M341.5 381.5v6M338.5 382.5l6 4M346.5 389.5h6M347.5 386.5l4 6M355.5 395.5h6M356.5 392.5l4 6M367.5 396.5v6M364.5 397.5l6 4M372.5 401.5h6M375.5 401.5v4M377.5 399.5l-4 5M383.5 408.5h6M384.5 405.5l4 6M393.5 408.5v6M390.5 409.5l6 4M260.5 333.5v6M257.5 334.5l6 4M270.5 337.5v6M267.5 338.5l6 4M278.5 343.5v6M275.5 344.5l6 4M284.5 349.5h6M285.5 346.5l4 6M294.5 354.5h6M295.5 351.5l4 6M306.5 355.5v6M303.5 356.5l6 4M313.5 359.5v6M310.5 360.5l6 4M320.5 366.5h6M323.5 366.5v4M325.5 364.5l-4 5M331.5 368.5v6M328.5 369.5l6 4M338.5 376.5h6M341.5 376.5v4M343.5 374.5l-4 5M347.5 380.5h6M350.5 380.5v4M352.5 378.5l-4 5M356.5 384.5h6M357.5 381.5l4 6M365.5 389.5h6M368.5 389.5v4M370.5 387.5l-4 5M374.5 393.5h6M375.5 390.5l4 6M384.5 398.5h6M387.5 398.5v4M389.5 396.5l-4 5M392.5 401.5h6M395.5 401.5v4M397.5 399.5l-4 5M402.5 405.5h6M405.5 405.5v4M407.5 403.5l-4 5M261.5 326.5v6M258.5 327.5l6 4M266.5 331.5h6M267.5 328.5l4 6M276.5 334.5h6M279.5 334.5v4M281.5 332.5l-4 5M287.5 337.5v6M284.5 338.5l6 4M297.5 343.5v6M294.5 344.5l6 4M302.5 349.5h6M303.5 346.5l4 6M311.5 353.5h6M314.5 353.5v4M316.5 351.5l-4 5M323.5 354.5v6M320.5 355.5l6 4M331.5 363.5h6M332.5 360.5l4 6M340.5 367.5h6M341.5 364.5l4 6M348.5 371.5h6M349.5 368.5l4 6M357.5 375.5h6M358.5 372.5l4 6M369.5 378.5v6M366.5 379.5l6 4M375.5 383.5h6M378.5 383.5v4M380.5 381.5l-4 5M383.5 390.5h6M384.5 387.5l4 6M393.5 392.5h6M396.5 392.5v4M398.5 390.5l-4 5M404.5 394.5v6M401.5 395.5l6 4M412.5 401.5h6M413.5 398.5l4 6M420.5 408.5h6M421.5 405.5l4 6M432.5 407.5v6M429.5 408.5l6 4M260.5 315.5v6M257.5 316.5l6 4M268.5 322.5h6M269.5 319.5l4 6M281.5 325.5v6M278.5 326.5l6 4M285.5 332.5h6M286.5 329.5l4 6M293.5 336.5h6M294.5 333.5l4 6M303.5 340.5h6M306.5 340.5v4M308.5 338.5l-4 5M313.5 343.5h6M316.5 343.5v4M318.5 341.5l-4 5M325.5 346.5v6M322.5 347.5l6 4M332.5 350.5v6M329.5 351.5l6 4M339.5 358.5h6M342.5 358.5v4M344.5 356.5l-4 5M349.5 361.5h6M352.5 361.5v4M354.5 359.5l-4 5M357.5 367.5h6M360.5 367.5v4M362.5 365.5l-4 5M369.5 368.5v6M366.5 369.5l6 4M378.5 373.5v6M375.5 374.5l6 4M388.5 376.5v6M385.5 377.5l6 4M392.5 383.5h6M395.5 383.5v4M397.5 381.5l-4 5M402.5 387.5h6M405.5 387.5v4M407.5 385.5l-4 5M412.5 392.5h6M415.5 392.5v4M417.5 390.5l-4 5M421.5 396.5h6M424.5 396.5v4M426.5 394.5l-4 5M429.5 400.5h6M432.5 400.5v4M434.5 398.5l-4 5M441.5 403.5v6M438.5 404.5l6 4M261.5 306.5v6M258.5 307.5l6 4M268.5 313.5h6M269.5 310.5l4 6M280.5 316.5v6M277.5 317.5l6 4M289.5 319.5v6M286.5 320.5l6 4M294.5 325.5h6M297.5 325.5v4M299.5 323.5l-4 5M304.5 330.5h6M307.5 330.5v4M309.5 328.5l-4 5M314.5 336.5h6M315.5 333.5l4 6M322.5 339.5h6M325.5 339.5v4M327.5 337.5l-4 5M334.5 342.5v6M331.5 343.5l6 4M344.5 345.5v6M341.5 346.5l6 4M351.5 351.5v6M348.5 352.5l6 4M361.5 354.5v6M358.5 355.5l6 4M371.5 359.5v6M368.5 360.5l6 4M377.5 367.5h6M380.5 367.5v4M382.5 365.5l-4 5M384.5 371.5h6M385.5 368.5l4 6M395.5 375.5h6M398.5 375.5v4M400.5 373.5l-4 5M403.5 381.5h6M404.5 378.5l4 6M412.5 383.5h6M415.5 383.5v4M417.5 381.5l-4 5M424.5 386.5v6M421.5 387.5l6 4M429.5 394.5h6M430.5 391.5l4 6M442.5 395.5v6M439.5 396.5l6 4M259.5 300.5h6M260.5 297.5l4 6M269.5 304.5h6M272.5 304.5v4M274.5 302.5l-4 5M281.5 307.5v6M278.5 308.5l6 4M286.5 313.5h6M287.5 310.5l4 6M296.5 316.5h6M299.5 316.5v4M301.5 314.5l-4 5M305.5 322.5h6M308.5 322.5v4M310.5 320.5l-4 5M318.5 323.5v6M315.5 324.5l6 4M325.5 328.5v6M322.5 329.5l6 4M331.5 335.5h6M334.5 335.5v4M336.5 333.5l-4 5M344.5 336.5v6M341.5 337.5l6 4M349.5 344.5h6M352.5 344.5v4M354.5 342.5l-4 5M358.5 347.5h6M361.5 347.5v4M363.5 345.5l-4 5M372.5 351.5v6M369.5 352.5l6 4M376.5 358.5h6M377.5 355.5l4 6M388.5 360.5v6M385.5 361.5l6 4M396.5 366.5h6M397.5 363.5l4 6M403.5 370.5h6M404.5 367.5l4 6M414.5 376.5h6M415.5 373.5l4 6M420.5 381.5h6M421.5 378.5l4 6M433.5 380.5v6M430.5 381.5l6 4M439.5 387.5h6M442.5 387.5v4M444.5 385.5l-4 5M259.5 291.5h6M262.5 291.5v4M264.5 289.5l-4 5M270.5 295.5h6M273.5 295.5v4M275.5 293.5l-4 5M277.5 300.5h6M280.5 300.5v4M282.5 298.5l-4 5M291.5 302.5v6M288.5 303.5l6 4M297.5 310.5h6M298.5 307.5l4 6M304.5 313.5h6M305.5 310.5l4 6M314.5 316.5h6M317.5 316.5v4M319.5 314.5l-4 5M323.5 322.5h6M326.5 322.5v4M328.5 320.5l-4 5M332.5 326.5h6M333.5 323.5l4 6M344.5 328.5v6M341.5 329.5l6 4M351.5 334.5h6M354.5 334.5v4M356.5 332.5l-4 5M359.5 340.5h6M362.5 340.5v4M364.5 338.5l-4 5M372.5 342.5v6M369.5 343.5l6 4M378.5 349.5h6M379.5 346.5l4 6M387.5 353.5h6M388.5 350.5l4 6M398.5 355.5v6M395.5 356.5l6 4M404.5 360.5h6M407.5 360.5v4M409.5 358.5l-4 5M414.5 366.5h6M417.5 366.5v4M419.5 364.5l-4 5M422.5 371.5h6M423.5 368.5l4 6M430.5 374.5h6M433.5 374.5v4M435.5 372.5l-4 5M440.5 379.5h6M441.5 376.5l4 6M261.5 282.5h6M264.5 282.5v4M266.5 280.5l-4 5M269.5 287.5h6M270.5 284.5l4 6M280.5 291.5h6M283.5 291.5v4M285.5 289.5l-4 5M290.5 292.5v6M287.5 293.5l6 4M296.5 299.5h6M299.5 299.5v4M301.5 297.5l-4 5M308.5 302.5v6M305.5 303.5l6 4M314.5 307.5h6M317.5 307.5v4M319.5 305.5l-4 5M326.5 310.5v6M323.5 311.5l6 4M333.5 316.5h6M336.5 316.5v4M338.5 314.5l-4 5M342.5 322.5h6M345.5 322.5v4M347.5 320.5l-4 5M352.5 326.5h6M355.5 326.5v4M357.5 324.5l-4 5M359.5 331.5h6M360.5 328.5l4 6M369.5 335.5h6M372.5 335.5v4M374.5 333.5l-4 5M377.5 340.5h6M380.5 340.5v4M382.5 338.5l-4 5M389.5 342.5v6M386.5 343.5l6 4M399.5 346.5v6M396.5 347.5l6 4M404.5 351.5h6M407.5 351.5v4M409.5 349.5l-4 5M414.5 357.5h6M415.5 354.5l4 6M423.5 361.5h6M424.5 358.5l4 6M436.5 364.5v6M433.5 365.5l6 4M442.5 370.5h6M445.5 370.5v4M447.5 368.5l-4 5M253.5 268.5h6M254.5 265.5l4 6M261.5 274.5h6M262.5 271.5l4 6M270.5 277.5h6M273.5 277.5v4M275.5 275.5l-4 5M280.5 280.5h6M283.5 280.5v4M285.5 278.5l-4 5M289.5 285.5h6M292.5 285.5v4M294.5 283.5l-4 5M297.5 290.5h6M300.5 290.5v4M302.5 288.5l-4 5M308.5 295.5h6M311.5 295.5v4M313.5 293.5l-4 5M317.5 297.5v6M314.5 298.5l6 4M324.5 302.5h6M327.5 302.5v4M329.5 300.5l-4 5M334.5 309.5h6M335.5 306.5l4 6M343.5 312.5h6M346.5 312.5v4M348.5 310.5l-4 5M356.5 315.5v6M353.5 316.5l6 4M361.5 321.5h6M364.5 321.5v4M366.5 319.5l-4 5M372.5 324.5v6M369.5 325.5l6 4M381.5 328.5v6M378.5 329.5l6 4M387.5 334.5h6M390.5 334.5v4M392.5 332.5l-4 5M395.5 338.5h6M396.5 335.5l4 6M406.5 344.5h6M407.5 341.5l4 6M417.5 344.5v6M414.5 345.5l6 4M423.5 354.5h6M424.5 351.5l4 6M432.5 356.5h6M433.5 353.5l4 6M440.5 361.5h6M441.5 358.5l4 6M252.5 259.5h6M255.5 259.5v4M257.5 257.5l-4 5M262.5 265.5h6M263.5 262.5l4 6M274.5 266.5v6M271.5 267.5l6 4M280.5 273.5h6M283.5 273.5v4M285.5 271.5l-4 5M289.5 277.5h6M290.5 274.5l4 6M302.5 279.5v6M299.5 280.5l6 4M306.5 284.5h6M309.5 284.5v4M311.5 282.5l-4 5M316.5 289.5h6M319.5 289.5v4M321.5 287.5l-4 5M329.5 293.5v6M326.5 294.5l6 4M335.5 299.5h6M336.5 296.5l4 6M346.5 300.5v6M343.5 301.5l6 4M353.5 307.5h6M356.5 307.5v4M358.5 305.5l-4 5M362.5 312.5h6M363.5 309.5l4 6M371.5 318.5h6M372.5 315.5l4 6M378.5 320.5h6M381.5 320.5v4M383.5 318.5l-4 5M392.5 322.5v6M389.5 323.5l6 4M400.5 328.5v6M397.5 329.5l6 4M407.5 334.5h6M410.5 334.5v4M412.5 332.5l-4 5M416.5 340.5h6M417.5 337.5l4 6M425.5 343.5h6M426.5 340.5l4 6M433.5 348.5h6M434.5 345.5l4 6M442.5 352.5h6M445.5 352.5v4M447.5 350.5l-4 5M253.5 251.5h6M256.5 251.5v4M258.5 249.5l-4 5M262.5 254.5h6M265.5 254.5v4M267.5 252.5l-4 5M274.5 256.5v6M271.5 257.5l6 4M284.5 262.5v6M281.5 263.5l6 4M289.5 268.5h6M290.5 265.5l4 6M301.5 270.5v6M298.5 271.5l6 4M307.5 277.5h6M310.5 277.5v4M312.5 275.5l-4 5M316.5 280.5h6M319.5 280.5v4M321.5 278.5l-4 5M329.5 284.5v6M326.5 285.5l6 4M337.5 288.5v6M334.5 289.5l6 4M345.5 294.5h6M346.5 291.5l4 6M352.5 298.5h6M355.5 298.5v4M357.5 296.5l-4 5M362.5 303.5h6M363.5 300.5l4 6M373.5 306.5v6M370.5 307.5l6 4M383.5 310.5v6M380.5 311.5l6 4M388.5 316.5h6M391.5 316.5v4M393.5 314.5l-4 5M399.5 321.5h6M402.5 321.5v4M404.5 319.5l-4 5M407.5 326.5h6M408.5 323.5l4 6M416.5 330.5h6M417.5 327.5l4 6M425.5 334.5h6M428.5 334.5v4M430.5 332.5l-4 5M437.5 335.5v6M434.5 336.5l6 4M254.5 243.5h6M255.5 240.5l4 6M267.5 243.5v6M264.5 244.5l6 4M272.5 250.5h6M275.5 250.5v4M277.5 248.5l-4 5M284.5 251.5v6M281.5 252.5l6 4M294.5 256.5v6M291.5 257.5l6 4M300.5 263.5h6M301.5 260.5l4 6M310.5 266.5v6M307.5 267.5l6 4M318.5 271.5h6M321.5 271.5v4M323.5 269.5l-4 5M330.5 275.5v6M327.5 276.5l6 4M336.5 282.5h6M337.5 279.5l4 6M348.5 283.5v6M345.5 284.5l6 4M354.5 289.5h6M357.5 289.5v4M359.5 287.5l-4 5M361.5 295.5h6M364.5 295.5v4M366.5 293.5l-4 5M371.5 299.5h6M374.5 299.5v4M376.5 297.5l-4 5M379.5 303.5h6M382.5 303.5v4M384.5 301.5l-4 5M388.5 307.5h6M391.5 307.5v4M393.5 305.5l-4 5M402.5 310.5v6M399.5 311.5l6 4M407.5 315.5h6M410.5 315.5v4M412.5 313.5l-4 5M417.5 319.5h6M420.5 319.5v4M422.5 317.5l-4 5M426.5 326.5h6M427.5 323.5l4 6M436.5 326.5v6M433.5 327.5l6 4M258.5 230.5v6M255.5 231.5l6 4M268.5 235.5v6M265.5 236.5l6 4M274.5 241.5h6M275.5 238.5l4 6M281.5 246.5h6M282.5 243.5l4 6M293.5 248.5v6M290.5 249.5l6 4M302.5 252.5v6M299.5 253.5l6 4M311.5 257.5v6M308.5 258.5l6 4M319.5 264.5h6M320.5 261.5l4 6M330.5 265.5v6M327.5 266.5l6 4M335.5 271.5h6M338.5 271.5v4M340.5 269.5l-4 5M348.5 274.5v6M345.5 275.5l6 4M353.5 281.5h6M354.5 278.5l4 6M364.5 286.5h6M367.5 286.5v4M369.5 284.5l-4 5M372.5 290.5h6M373.5 287.5l4 6M383.5 291.5v6M380.5 292.5l6 4M389.5 299.5h6M390.5 296.5l4 6M403.5 301.5v6M400.5 302.5l6 4M412.5 306.5v6M409.5 307.5l6 4M418.5 311.5h6M421.5 311.5v4M423.5 309.5l-4 5M428.5 315.5v6M425.5 316.5l6 4M435.5 322.5h6M436.5 319.5l4 6M259.5 221.5v6M256.5 222.5l6 4M267.5 225.5v6M264.5 226.5l6 4M274.5 232.5h6M277.5 232.5v4M279.5 230.5l-4 5M282.5 235.5h6M285.5 235.5v4M287.5 233.5l-4 5M294.5 239.5v6M291.5 240.5l6 4M304.5 243.5v6M301.5 244.5l6 4M313.5 247.5v6M310.5 248.5l6 4M323.5 253.5v6M320.5 254.5l6 4M328.5 258.5h6M331.5 258.5v4M333.5 256.5l-4 5M338.5 264.5h6M339.5 261.5l4 6M345.5 269.5h6M346.5 266.5l4 6M354.5 272.5h6M357.5 272.5v4M359.5 270.5l-4 5M366.5 274.5v6M363.5 275.5l6 4M373.5 281.5h6M376.5 281.5v4M378.5 279.5l-4 5M383.5 283.5h6M386.5 283.5v4M388.5 281.5l-4 5M391.5 289.5h6M394.5 289.5v4M396.5 287.5l-4 5M399.5 294.5h6M400.5 291.5l4 6M408.5 300.5h6M409.5 297.5l4 6M421.5 300.5v6M418.5 301.5l6 4M429.5 304.5v6M426.5 305.5l6 4M436.5 312.5h6M437.5 309.5l4 6M255.5 216.5h6M256.5 213.5l4 6M268.5 217.5v6M265.5 218.5l6 4M273.5 224.5h6M276.5 224.5v4M278.5 222.5l-4 5M283.5 228.5h6M284.5 225.5l4 6M292.5 232.5h6M295.5 232.5v4M297.5 230.5l-4 5M300.5 238.5h6M301.5 235.5l4 6M311.5 242.5h6M314.5 242.5v4M316.5 240.5l-4 5M319.5 244.5h6M322.5 244.5v4M324.5 242.5l-4 5M329.5 251.5h6M330.5 248.5l4 6M337.5 255.5h6M338.5 252.5l4 6M345.5 258.5h6M348.5 258.5v4M350.5 256.5l-4 5M355.5 263.5h6M358.5 263.5v4M360.5 261.5l-4 5M368.5 265.5v6M365.5 266.5l6 4M373.5 270.5h6M376.5 270.5v4M378.5 268.5l-4 5M385.5 275.5v6M382.5 276.5l6 4M395.5 278.5v6M392.5 279.5l6 4M401.5 284.5h6M402.5 281.5l4 6M412.5 286.5v6M409.5 287.5l6 4M419.5 295.5h6M420.5 292.5l4 6M431.5 296.5v6M428.5 297.5l6 4M440.5 300.5v6M437.5 301.5l6 4M259.5 204.5v6M256.5 205.5l6 4M268.5 207.5v6M265.5 208.5l6 4M274.5 214.5h6M277.5 214.5v4M279.5 212.5l-4 5M283.5 219.5h6M286.5 219.5v4M288.5 217.5l-4 5M293.5 225.5h6M294.5 222.5l4 6M302.5 228.5h6M303.5 225.5l4 6M309.5 230.5h6M312.5 230.5v4M314.5 228.5l-4 5M321.5 236.5h6M324.5 236.5v4M326.5 234.5l-4 5M328.5 241.5h6M329.5 238.5l4 6M337.5 244.5h6M340.5 244.5v4M342.5 242.5l-4 5M347.5 250.5h6M350.5 250.5v4M352.5 248.5l-4 5M356.5 254.5h6M359.5 254.5v4M361.5 252.5l-4 5M366.5 255.5v6M363.5 256.5l6 4M373.5 263.5h6M376.5 263.5v4M378.5 261.5l-4 5M382.5 267.5h6M385.5 267.5v4M387.5 265.5l-4 5M395.5 268.5v6M392.5 269.5l6 4M402.5 276.5h6M403.5 273.5l4 6M409.5 281.5h6M412.5 281.5v4M414.5 279.5l-4 5M421.5 283.5v6M418.5 284.5l6 4M428.5 289.5h6M429.5 286.5l4 6M441.5 292.5v6M438.5 293.5l6 4M258.5 197.5h6M261.5 197.5v4M263.5 195.5l-4 5M268.5 199.5v6M265.5 200.5l6 4M277.5 202.5v6M274.5 203.5l6 4M287.5 207.5v6M284.5 208.5l6 4M293.5 215.5h6M296.5 215.5v4M298.5 213.5l-4 5M302.5 219.5h6M305.5 219.5v4M307.5 217.5l-4 5M311.5 223.5h6M312.5 220.5l4 6M320.5 228.5h6M321.5 225.5l4 6M330.5 232.5h6M333.5 232.5v4M335.5 230.5l-4 5M337.5 236.5h6M338.5 233.5l4 6M350.5 239.5v6M347.5 240.5l6 4M356.5 246.5h6M357.5 243.5l4 6M365.5 251.5h6M366.5 248.5l4 6M375.5 254.5h6M378.5 254.5v4M380.5 252.5l-4 5M384.5 258.5h6M385.5 255.5l4 6M391.5 261.5h6M394.5 261.5v4M396.5 259.5l-4 5M400.5 267.5h6M401.5 264.5l4 6M414.5 269.5v6M411.5 270.5l6 4M418.5 275.5h6M419.5 272.5l4 6M428.5 280.5h6M429.5 277.5l4 6M438.5 285.5h6M439.5 282.5l4 6M259.5 187.5h6M262.5 187.5v4M264.5 185.5l-4 5M266.5 194.5h6M267.5 191.5l4 6M279.5 193.5v6M276.5 194.5l6 4M287.5 198.5v6M284.5 199.5l6 4M294.5 207.5h6M295.5 204.5l4 6M306.5 207.5v6M303.5 208.5l6 4M311.5 215.5h6M312.5 212.5l4 6M321.5 219.5h6M322.5 216.5l4 6M333.5 221.5v6M330.5 222.5l6 4M342.5 226.5v6M339.5 227.5l6 4M351.5 228.5v6M348.5 229.5l6 4M358.5 235.5h6M361.5 235.5v4M363.5 233.5l-4 5M368.5 238.5v6M365.5 239.5l6 4M377.5 242.5v6M374.5 243.5l6 4M386.5 246.5v6M383.5 247.5l6 4M396.5 251.5v6M393.5 252.5l6 4M402.5 257.5h6M405.5 257.5v4M407.5 255.5l-4 5M412.5 263.5h6M413.5 260.5l4 6M423.5 265.5v6M420.5 266.5l6 4M428.5 270.5h6M429.5 267.5l4 6M437.5 276.5h6M440.5 276.5v4M442.5 274.5l-4 5M258.5 178.5h6M261.5 178.5v4M263.5 176.5l-4 5M268.5 183.5h6M269.5 180.5l4 6M275.5 186.5h6M278.5 186.5v4M280.5 184.5l-4 5M285.5 191.5h6M286.5 188.5l4 6M295.5 196.5h6M298.5 196.5v4M300.5 194.5l-4 5M305.5 198.5v6M302.5 199.5l6 4M313.5 205.5h6M314.5 202.5l4 6M321.5 208.5h6M324.5 208.5v4M326.5 206.5l-4 5M331.5 214.5h6M334.5 214.5v4M336.5 212.5l-4 5M339.5 217.5h6M342.5 217.5v4M344.5 215.5l-4 5M350.5 219.5v6M347.5 220.5l6 4M357.5 226.5h6M360.5 226.5v4M362.5 224.5l-4 5M366.5 230.5h6M369.5 230.5v4M371.5 228.5l-4 5M378.5 233.5v6M375.5 234.5l6 4M388.5 239.5v6M385.5 240.5l6 4M394.5 243.5h6M397.5 243.5v4M399.5 241.5l-4 5M403.5 249.5h6M406.5 249.5v4M408.5 247.5l-4 5M414.5 251.5v6M411.5 252.5l6 4M421.5 257.5h6M422.5 254.5l4 6M432.5 260.5v6M429.5 261.5l6 4M438.5 266.5h6M441.5 266.5v4M443.5 264.5l-4 5M259.5 170.5h6M260.5 167.5l4 6M272.5 171.5v6M269.5 172.5l6 4M278.5 177.5h6M281.5 177.5v4M283.5 175.5l-4 5M285.5 183.5h6M288.5 183.5v4M290.5 181.5l-4 5M296.5 187.5h6M299.5 187.5v4M301.5 185.5l-4 5M304.5 190.5h6M307.5 190.5v4M309.5 188.5l-4 5M312.5 196.5h6M313.5 193.5l4 6M321.5 201.5h6M324.5 201.5v4M326.5 199.5l-4 5M333.5 202.5v6M330.5 203.5l6 4M339.5 209.5h6M342.5 209.5v4M344.5 207.5l-4 5M352.5 210.5v6M349.5 211.5l6 4M358.5 217.5h6M361.5 217.5v4M363.5 215.5l-4 5M371.5 220.5v6M368.5 221.5l6 4M375.5 227.5h6M378.5 227.5v4M380.5 225.5l-4 5M384.5 231.5h6M387.5 231.5v4M389.5 229.5l-4 5M393.5 235.5h6M396.5 235.5v4M398.5 233.5l-4 5M402.5 241.5h6M403.5 238.5l4 6M411.5 245.5h6M414.5 245.5v4M416.5 243.5l-4 5M421.5 250.5h6M422.5 247.5l4 6M429.5 254.5h6M430.5 251.5l4 6M442.5 255.5v6M439.5 256.5l6 4M260.5 162.5h6M261.5 159.5l4 6M268.5 165.5h6M269.5 162.5l4 6M277.5 168.5h6M280.5 168.5v4M282.5 166.5l-4 5M287.5 174.5h6M288.5 171.5l4 6M297.5 175.5v6M294.5 176.5l6 4M305.5 184.5h6M306.5 181.5l4 6M313.5 187.5h6M316.5 187.5v4M318.5 185.5l-4 5M322.5 190.5h6M325.5 190.5v4M327.5 188.5l-4 5M334.5 194.5v6M331.5 195.5l6 4M344.5 197.5v6M341.5 198.5l6 4M352.5 203.5v6M349.5 204.5l6 4M363.5 207.5v6M360.5 208.5l6 4M367.5 215.5h6M368.5 212.5l4 6M376.5 217.5h6M377.5 214.5l4 6M388.5 220.5v6M385.5 221.5l6 4M394.5 226.5h6M397.5 226.5v4M399.5 224.5l-4 5M403.5 231.5h6M406.5 231.5v4M408.5 229.5l-4 5M413.5 235.5h6M416.5 235.5v4M418.5 233.5l-4 5M420.5 240.5h6M423.5 240.5v4M425.5 238.5l-4 5M430.5 243.5h6M433.5 243.5v4M435.5 241.5l-4 5M440.5 249.5h6M441.5 246.5l4 6M252.5 147.5h6M255.5 147.5v4M257.5 145.5l-4 5M261.5 153.5h6M262.5 150.5l4 6M272.5 154.5v6M269.5 155.5l6 4M278.5 160.5h6M281.5 160.5v4M283.5 158.5l-4 5M287.5 165.5h6M288.5 162.5l4 6M297.5 170.5h6M300.5 170.5v4M302.5 168.5l-4 5M306.5 173.5h6M309.5 173.5v4M311.5 171.5l-4 5M313.5 178.5h6M314.5 175.5l4 6M322.5 182.5h6M323.5 179.5l4 6M332.5 186.5h6M335.5 186.5v4M337.5 184.5l-4 5M343.5 189.5v6M340.5 190.5l6 4M354.5 193.5v6M351.5 194.5l6 4M362.5 198.5v6M359.5 199.5l6 4M372.5 201.5v6M369.5 202.5l6 4M377.5 208.5h6M380.5 208.5v4M382.5 206.5l-4 5M387.5 213.5h6M388.5 210.5l4 6M398.5 216.5v6M395.5 217.5l6 4M407.5 220.5v6M404.5 221.5l6 4M417.5 223.5v6M414.5 224.5l6 4M421.5 232.5h6M422.5 229.5l4 6M430.5 236.5h6M431.5 233.5l4 6M441.5 240.5h6M442.5 237.5l4 6M253.5 139.5h6M254.5 136.5l4 6M260.5 142.5h6M263.5 142.5v4M265.5 140.5l-4 5M269.5 147.5h6M270.5 144.5l4 6M278.5 151.5h6M279.5 148.5l4 6M287.5 155.5h6M290.5 155.5v4M292.5 153.5l-4 5M297.5 161.5h6M298.5 158.5l4 6M306.5 166.5h6M307.5 163.5l4 6M317.5 167.5v6M314.5 168.5l6 4M325.5 175.5h6M326.5 172.5l4 6M336.5 176.5v6M333.5 177.5l6 4M341.5 182.5h6M344.5 182.5v4M346.5 180.5l-4 5M352.5 185.5h6M355.5 185.5v4M357.5 183.5l-4 5M360.5 191.5h6M363.5 191.5v4M365.5 189.5l-4 5M372.5 192.5v6M369.5 193.5l6 4M380.5 197.5v6M377.5 198.5l6 4M387.5 203.5h6M390.5 203.5v4M392.5 201.5l-4 5M397.5 210.5h6M398.5 207.5l4 6M407.5 210.5v6M404.5 211.5l6 4M415.5 218.5h6M418.5 218.5v4M420.5 216.5l-4 5M422.5 223.5h6M423.5 220.5l4 6M432.5 226.5h6M433.5 223.5l4 6M445.5 228.5v6M442.5 229.5l6 4M262.5 132.5h6M265.5 132.5v4M267.5 130.5l-4 5M273.5 135.5v6M270.5 136.5l6 4M281.5 142.5h6M282.5 139.5l4 6M291.5 144.5v6M288.5 145.5l6 4M298.5 151.5h6M301.5 151.5v4M303.5 149.5l-4 5M307.5 155.5h6M308.5 152.5l4 6M315.5 160.5h6M318.5 160.5v4M320.5 158.5l-4 5M324.5 164.5h6M325.5 161.5l4 6M333.5 169.5h6M334.5 166.5l4 6M343.5 174.5h6M344.5 171.5l4 6M354.5 175.5v6M351.5 176.5l6 4M361.5 182.5h6M364.5 182.5v4M366.5 180.5l-4 5M369.5 187.5h6M372.5 187.5v4M374.5 185.5l-4 5M378.5 190.5h6M379.5 187.5l4 6M386.5 197.5h6M387.5 194.5l4 6M397.5 199.5h6M398.5 196.5l4 6M409.5 201.5v6M406.5 202.5l6 4M414.5 209.5h6M415.5 206.5l4 6M423.5 212.5h6M426.5 212.5v4M428.5 210.5l-4 5M435.5 213.5v6M432.5 214.5l6 4M442.5 220.5h6M445.5 220.5v4M447.5 218.5l-4 5M253.5 120.5h6M254.5 117.5l4 6M265.5 122.5v6M262.5 123.5l6 4M270.5 128.5h6M273.5 128.5v4M275.5 126.5l-4 5M283.5 131.5v6M280.5 132.5l6 4M292.5 134.5v6M289.5 135.5l6 4M302.5 140.5v6M299.5 141.5l6 4M310.5 145.5v6M307.5 146.5l6 4M315.5 151.5h6M316.5 148.5l4 6M325.5 156.5h6M326.5 153.5l4 6M333.5 161.5h6M334.5 158.5l4 6M346.5 161.5v6M343.5 162.5l6 4M353.5 167.5h6M356.5 167.5v4M358.5 165.5l-4 5M362.5 174.5h6M363.5 171.5l4 6M370.5 178.5h6M371.5 175.5l4 6M379.5 182.5h6M380.5 179.5l4 6M389.5 186.5h6M392.5 186.5v4M394.5 184.5l-4 5M400.5 188.5v6M397.5 189.5l6 4M410.5 193.5v6M407.5 194.5l6 4M414.5 199.5h6M417.5 199.5v4M419.5 197.5l-4 5M424.5 204.5h6M427.5 204.5v4M429.5 202.5l-4 5M433.5 208.5h6M436.5 208.5v4M438.5 206.5l-4 5M441.5 213.5h6M442.5 210.5l4 6M254.5 110.5h6M257.5 110.5v4M259.5 108.5l-4 5M263.5 115.5h6M264.5 112.5l4 6M273.5 120.5h6M274.5 117.5l4 6M283.5 122.5v6M280.5 123.5l6 4M293.5 126.5v6M290.5 127.5l6 4M299.5 133.5h6M302.5 133.5v4M304.5 131.5l-4 5M307.5 136.5h6M310.5 136.5v4M312.5 134.5l-4 5M319.5 139.5v6M316.5 140.5l6 4M325.5 146.5h6M326.5 143.5l4 6M334.5 150.5h6M335.5 147.5l4 6M346.5 152.5v6M343.5 153.5l6 4M356.5 157.5v6M353.5 158.5l6 4M362.5 163.5h6M365.5 163.5v4M367.5 161.5l-4 5M371.5 168.5h6M374.5 168.5v4M376.5 166.5l-4 5M383.5 171.5v6M380.5 172.5l6 4M387.5 177.5h6M390.5 177.5v4M392.5 175.5l-4 5M398.5 182.5h6M399.5 179.5l4 6M409.5 183.5v6M406.5 184.5l6 4M417.5 191.5h6M418.5 188.5l4 6M427.5 191.5v6M424.5 192.5l6 4M437.5 196.5v6M434.5 197.5l6 4M445.5 201.5v6M442.5 202.5l6 4M254.5 101.5h6M257.5 101.5v4M259.5 99.5l-4 5M264.5 106.5h6M265.5 103.5l4 6M272.5 111.5h6M275.5 111.5v4M277.5 109.5l-4 5M285.5 112.5v6M282.5 113.5l6 4M290.5 120.5h6M293.5 120.5v4M295.5 118.5l-4 5M303.5 122.5v6M300.5 123.5l6 4M309.5 128.5h6M310.5 125.5l4 6M321.5 130.5v6M318.5 131.5l6 4M327.5 138.5h6M328.5 135.5l4 6M335.5 143.5h6M336.5 140.5l4 6M344.5 147.5h6M345.5 144.5l4 6M353.5 151.5h6M356.5 151.5v4M358.5 149.5l-4 5M362.5 154.5h6M365.5 154.5v4M367.5 152.5l-4 5M373.5 156.5v6M370.5 157.5l6 4M380.5 163.5h6M381.5 160.5l4 6M390.5 168.5h6M391.5 165.5l4 6M399.5 173.5h6M402.5 173.5v4M404.5 171.5l-4 5M410.5 176.5v6M407.5 177.5l6 4M417.5 180.5h6M420.5 180.5v4M422.5 178.5l-4 5M426.5 186.5h6M427.5 183.5l4 6M437.5 188.5v6M434.5 189.5l6 4M258.5 91.5v6M255.5 92.5l6 4M264.5 97.5h6M265.5 94.5l4 6M273.5 101.5h6M276.5 101.5v4M278.5 99.5l-4 5M285.5 105.5v6M282.5 106.5l6 4M290.5 111.5h6M293.5 111.5v4M295.5 109.5l-4 5M299.5 114.5h6M302.5 114.5v4M304.5 112.5l-4 5M309.5 120.5h6M310.5 117.5l4 6M317.5 124.5h6M318.5 121.5l4 6M330.5 125.5v6M327.5 126.5l6 4M336.5 133.5h6M339.5 133.5v4M341.5 131.5l-4 5M345.5 137.5h6M348.5 137.5v4M350.5 135.5l-4 5M353.5 142.5h6M354.5 139.5l4 6M362.5 145.5h6M363.5 142.5l4 6M372.5 151.5h6M375.5 151.5v4M377.5 149.5l-4 5M385.5 153.5v6M382.5 154.5l6 4M392.5 155.5v6M389.5 156.5l6 4M398.5 163.5h6M401.5 163.5v4M403.5 161.5l-4 5M411.5 165.5v6M408.5 166.5l6 4M418.5 173.5h6M419.5 170.5l4 6M430.5 175.5v6M427.5 176.5l6 4M435.5 180.5h6M438.5 180.5v4M440.5 178.5l-4 5M256.5 83.5h6M259.5 83.5v4M261.5 81.5l-4 5M266.5 88.5h6M269.5 88.5v4M271.5 86.5l-4 5M272.5 92.5h6M273.5 89.5l4 6M285.5 95.5v6M282.5 96.5l6 4M290.5 101.5h6M293.5 101.5v4M295.5 99.5l-4 5M301.5 108.5h6M302.5 105.5l4 6M309.5 111.5h6M310.5 108.5l4 6M319.5 115.5h6M320.5 112.5l4 6M329.5 117.5v6M326.5 118.5l6 4M340.5 121.5v6M337.5 122.5l6 4M346.5 128.5h6M347.5 125.5l4 6M354.5 132.5h6M357.5 132.5v4M359.5 130.5l-4 5M364.5 138.5h6M365.5 135.5l4 6M373.5 141.5h6M374.5 138.5l4 6M381.5 145.5h6M384.5 145.5v4M386.5 143.5l-4 5M391.5 149.5h6M394.5 149.5v4M396.5 147.5l-4 5M399.5 155.5h6M400.5 152.5l4 6M408.5 160.5h6M409.5 157.5l4 6M418.5 162.5h6M421.5 162.5v4M423.5 160.5l-4 5M427.5 167.5h6M428.5 164.5l4 6M435.5 171.5h6M438.5 171.5v4M440.5 169.5l-4 5M259.5 72.5v6M256.5 73.5l6 4M265.5 79.5h6M266.5 76.5l4 6M274.5 83.5h6M277.5 83.5v4M279.5 81.5l-4 5M285.5 85.5v6M282.5 86.5l6 4M292.5 93.5h6M293.5 90.5l4 6M305.5 95.5v6M302.5 96.5l6 4M311.5 101.5h6M312.5 98.5l4 6M321.5 102.5v6M318.5 103.5l6 4M329.5 111.5h6M330.5 108.5l4 6M337.5 115.5h6M338.5 112.5l4 6M347.5 118.5h6M350.5 118.5v4M352.5 116.5l-4 5M355.5 125.5h6M356.5 122.5l4 6M363.5 128.5h6M366.5 128.5v4M368.5 126.5l-4 5M377.5 130.5v6M374.5 131.5l6 4M384.5 134.5v6M381.5 135.5l6 4M391.5 140.5h6M394.5 140.5v4M396.5 138.5l-4 5M400.5 145.5h6M403.5 145.5v4M405.5 143.5l-4 5M409.5 149.5h6M412.5 149.5v4M414.5 147.5l-4 5M418.5 155.5h6M419.5 152.5l4 6M429.5 156.5v6M426.5 157.5l6 4M437.5 163.5h6M438.5 160.5l4 6M257.5 66.5h6M260.5 66.5v4M262.5 64.5l-4 5M270.5 68.5v6M267.5 69.5l6 4M275.5 74.5h6M278.5 74.5v4M280.5 72.5l-4 5M287.5 76.5v6M284.5 77.5l6 4M293.5 84.5h6M296.5 84.5v4M298.5 82.5l-4 5M300.5 89.5h6M301.5 86.5l4 6M311.5 94.5h6M312.5 91.5l4 6M321.5 97.5h6M322.5 94.5l4 6M332.5 98.5v6M329.5 99.5l6 4M339.5 104.5h6M342.5 104.5v4M344.5 102.5l-4 5M347.5 110.5h6M348.5 107.5l4 6M356.5 114.5h6M359.5 114.5v4M361.5 112.5l-4 5M364.5 119.5h6M365.5 116.5l4 6M374.5 124.5h6M375.5 121.5l4 6M386.5 125.5v6M383.5 126.5l6 4M393.5 132.5h6M396.5 132.5v4M398.5 130.5l-4 5M403.5 133.5v6M400.5 134.5l6 4M410.5 142.5h6M411.5 139.5l4 6M418.5 147.5h6M419.5 144.5l4 6M427.5 150.5h6M430.5 150.5v4M432.5 148.5l-4 5M436.5 154.5h6M439.5 154.5v4M441.5 152.5l-4 5M258.5 57.5h6M259.5 54.5l4 6M270.5 59.5v6M267.5 60.5l6 4M279.5 63.5v6M276.5 64.5l6 4M284.5 71.5h6M287.5 71.5v4M289.5 69.5l-4 5M292.5 74.5h6M295.5 74.5v4M297.5 72.5l-4 5M302.5 80.5h6M303.5 77.5l4 6M311.5 82.5h6M314.5 82.5v4M316.5 80.5l-4 5M321.5 89.5h6M322.5 86.5l4 6M332.5 91.5v6M329.5 92.5l6 4M340.5 95.5v6M337.5 96.5l6 4M348.5 101.5h6M349.5 98.5l4 6M357.5 106.5h6M358.5 103.5l4 6M367.5 106.5v6M364.5 107.5l6 4M377.5 112.5v6M374.5 113.5l6 4M387.5 116.5v6M384.5 117.5l6 4M393.5 123.5h6M394.5 120.5l4 6M402.5 126.5h6M405.5 126.5v4M407.5 124.5l-4 5M412.5 130.5v6M409.5 131.5l6 4M419.5 136.5h6M420.5 133.5l4 6M428.5 139.5h6M431.5 139.5v4M433.5 137.5l-4 5M439.5 142.5v6M436.5 143.5l6 4M277.5 57.5h6M280.5 57.5v4M282.5 55.5l-4 5M286.5 62.5h6M289.5 62.5v4M291.5 60.5l-4 5M293.5 66.5h6M296.5 66.5v4M298.5 64.5l-4 5M307.5 68.5v6M304.5 69.5l6 4M314.5 73.5v6M311.5 74.5l6 4M320.5 78.5h6M323.5 78.5v4M325.5 76.5l-4 5M330.5 82.5h6M333.5 82.5v4M335.5 80.5l-4 5M339.5 89.5h6M340.5 86.5l4 6M347.5 91.5h6M350.5 91.5v4M352.5 89.5l-4 5M360.5 94.5v6M357.5 95.5l6 4M369.5 97.5v6M366.5 98.5l6 4M377.5 104.5v6M374.5 105.5l6 4M383.5 109.5h6M386.5 109.5v4M388.5 107.5l-4 5M392.5 115.5h6M393.5 112.5l4 6M403.5 119.5h6M404.5 116.5l4 6M412.5 121.5h6M415.5 121.5v4M417.5 119.5l-4 5M423.5 125.5v6M420.5 126.5l6 4M429.5 131.5h6M432.5 131.5v4M434.5 129.5l-4 5M441.5 133.5v6M438.5 134.5l6 4M296.5 57.5h6M297.5 54.5l4 6M306.5 59.5v6M303.5 60.5l6 4M314.5 64.5v6M311.5 65.5l6 4M321.5 69.5h6M324.5 69.5v4M326.5 67.5l-4 5M334.5 71.5v6M331.5 72.5l6 4M343.5 77.5v6M340.5 78.5l6 4M351.5 80.5v6M348.5 81.5l6 4M357.5 88.5h6M358.5 85.5l4 6M368.5 91.5h6M371.5 91.5v4M373.5 89.5l-4 5M376.5 96.5h6M377.5 93.5l4 6M384.5 101.5h6M387.5 101.5v4M389.5 99.5l-4 5M397.5 103.5v6M394.5 104.5l6 4M402.5 110.5h6M405.5 110.5v4M407.5 108.5l-4 5M411.5 115.5h6M412.5 112.5l4 6M423.5 117.5v6M420.5 118.5l6 4M430.5 121.5h6M433.5 121.5v4M435.5 119.5l-4 5M440.5 126.5h6M443.5 126.5v4M445.5 124.5l-4 5M316.5 54.5v6M313.5 55.5l6 4M321.5 61.5h6M322.5 58.5l4 6M332.5 64.5h6M335.5 64.5v4M337.5 62.5l-4 5M340.5 70.5h6M343.5 70.5v4M345.5 68.5l-4 5M349.5 73.5h6M352.5 73.5v4M354.5 71.5l-4 5M360.5 75.5v6M357.5 76.5l6 4M367.5 83.5h6M370.5 83.5v4M372.5 81.5l-4 5M378.5 84.5v6M375.5 85.5l6 4M385.5 91.5h6M388.5 91.5v4M390.5 89.5l-4 5M394.5 96.5h6M395.5 93.5l4 6M406.5 99.5v6M403.5 100.5l6 4M413.5 105.5h6M416.5 105.5v4M418.5 103.5l-4 5M420.5 108.5h6M423.5 108.5v4M425.5 106.5l-4 5M433.5 111.5v6M430.5 112.5l6 4M440.5 118.5h6M441.5 115.5l4 6M336.5 55.5v6M333.5 56.5l6 4M340.5 61.5h6M343.5 61.5v4M345.5 59.5l-4 5M352.5 63.5v6M349.5 64.5l6 4M359.5 70.5h6M362.5 70.5v4M364.5 68.5l-4 5M367.5 73.5h6M368.5 70.5l4 6M379.5 75.5v6M376.5 76.5l6 4M386.5 82.5h6M389.5 82.5v4M391.5 80.5l-4 5M393.5 87.5h6M396.5 87.5v4M398.5 85.5l-4 5M407.5 90.5v6M404.5 91.5l6 4M412.5 96.5h6M413.5 93.5l4 6M421.5 100.5h6M422.5 97.5l4 6M430.5 105.5h6M433.5 105.5v4M435.5 103.5l-4 5M443.5 107.5v6M440.5 108.5l6 4M349.5 56.5h6M350.5 53.5l4 6M359.5 62.5h6M360.5 59.5l4 6M368.5 65.5h6M369.5 62.5l4 6M380.5 67.5v6M377.5 68.5l6 4M389.5 70.5v6M386.5 71.5l6 4M394.5 79.5h6M395.5 76.5l4 6M404.5 83.5h6M407.5 83.5v4M409.5 81.5l-4 5M414.5 87.5h6M415.5 84.5l4 6M423.5 91.5h6M426.5 91.5v4M428.5 89.5l-4 5M431.5 96.5h6M432.5 93.5l4 6M443.5 98.5v6M440.5 99.5l6 4M371.5 54.5v6M368.5 55.5l6 4M377.5 59.5h6M380.5 59.5v4M382.5 57.5l-4 5M387.5 63.5h6M390.5 63.5v4M392.5 61.5l-4 5M395.5 68.5h6M398.5 68.5v4M400.5 66.5l-4 5M406.5 73.5h6M407.5 70.5l4 6M413.5 79.5h6M416.5 79.5v4M418.5 77.5l-4 5M424.5 82.5h6M427.5 82.5v4M429.5 80.5l-4 5M433.5 86.5h6M436.5 86.5v4M438.5 84.5l-4 5M441.5 91.5h6M442.5 88.5l4 6M387.5 57.5h6M388.5 54.5l4 6M396.5 59.5h6M399.5 59.5v4M401.5 57.5l-4 5M406.5 65.5h6M409.5 65.5v4M411.5 63.5l-4 5M414.5 69.5h6M417.5 69.5v4M419.5 67.5l-4 5M427.5 70.5v6M424.5 71.5l6 4M431.5 79.5h6M432.5 76.5l4 6M443.5 80.5v6M440.5 81.5l6 4M406.5 57.5h6M407.5 54.5l4 6M414.5 61.5h6M415.5 58.5l4 6M425.5 63.5h6M428.5 63.5v4M430.5 61.5l-4 5M433.5 69.5h6M436.5 69.5v4M438.5 67.5l-4 5M442.5 74.5h6M445.5 74.5v4M447.5 72.5l-4 5M425.5 56.5h6M428.5 56.5v4M430.5 54.5l-4 5M433.5 59.5h6M436.5 59.5v4M438.5 57.5l-4 5" stroke="#786e6e" stroke-width="1" fill="none" shape-rendering="crispEdges"/>
<polygon points="397.9,128.6 401.9,137.6 406.4,147.6 410.4,156.4 418.5,162.1 427.4,166.7 432.8,172.4 436.4,179.2 439.0,192.9 440.6,210.0 439.8,226.5 437.3,243.2 434.0,259.9 427.2,278.3 420.7,298.3 414.0,320.0 407.3,340.0 403.8,343.8 397.2,355.3 392.2,365.3 383.8,377.0 377.0,383.8 366.9,388.9 360.4,393.8 350.3,400.4 340.4,406.3 335.5,408.9 331.3,400.9 336.0,398.4 345.6,392.8 355.2,386.4 362.3,381.1 371.8,376.4 376.8,371.3 384.5,360.6 389.3,351.0 396.3,338.8 399.0,336.5 405.4,317.3 412.1,295.6 418.7,275.4 425.3,257.4 428.4,241.6 430.8,225.6 431.6,210.2 430.1,194.1 427.7,181.8 425.5,177.7 422.2,174.0 413.8,169.8 403.5,162.1 398.2,151.3 393.7,141.3 389.7,132.2" fill="url(#pw)" opacity="0.55"/>
<polygon points="298.0,245.4 303.5,237.6 311.3,240.7 316.0,234.7 323.9,237.6 328.6,245.4 331.7,254.8 330.0,262.6 328.6,268.9 327.8,278.2 323.9,290.0 320.7,290.8 314.5,286.9 308.2,281.4 303.5,273.6 302.0,265.7 300.4,257.9 298.0,251.6" fill="#000"/>
<polygon points="343.0,400.3 366.0,386.3 367.0,387.8 345.0,401.8" fill="#000"/>
</g>
<polygon points="343.0,43.0 362.0,40.0 368.0,45.0 378.0,55.0 386.0,66.0 391.0,83.0 392.5,100.0 392.5,119.0 392.0,124.0 389.8,118.0 380.0,109.5 373.0,102.6 364.7,91.5 359.0,77.7 351.0,64.0 344.0,50.0" fill="#fff"/>
<polygon points="343.0,43.0 362.0,40.0 368.0,45.0 378.0,55.0 386.0,66.0 391.0,83.0 392.5,100.0 392.5,119.0 392.0,124.0 389.8,118.0 380.0,109.5 373.0,102.6 364.7,91.5 359.0,77.7 351.0,64.0 344.0,50.0" fill="url(#pw)"/>
<polygon points="371.6,95.6 373.5,95.5 379.5,104.5 378.5,105.3" fill="#000"/>
<polygon points="355.0,73.5 356.5,73.5 365.0,85.5 364.0,86.0" fill="#333"/>
<path d="M259.5 170.5h6M260.5 167.5l4 6M263.5 168.5l-2 4M260.5 161.5h6M261.5 158.5l4 6M264.5 159.5l-2 4M269.5 165.5h6M270.5 162.5l4 6M273.5 163.5l-2 4M278.5 161.5h6M279.5 158.5l4 6M282.5 159.5l-2 4M279.5 152.5h6M280.5 149.5l4 6M283.5 150.5l-2 4M279.5 143.5h6M280.5 140.5l4 6M283.5 141.5l-2 4M288.5 147.5h6M289.5 144.5l4 6M292.5 145.5l-2 4M297.5 152.5h6M298.5 149.5l4 6M301.5 150.5l-2 4M289.5 138.5h6M290.5 135.5l4 6M293.5 136.5l-2 4M298.5 143.5h6M299.5 140.5l4 6M302.5 141.5l-2 4M307.5 147.5h6M308.5 144.5l4 6M311.5 145.5l-2 4M299.5 134.5h6M300.5 131.5l4 6M303.5 132.5l-2 4M308.5 138.5h6M309.5 135.5l4 6M312.5 136.5l-2 4M317.5 142.5h6M318.5 139.5l4 6M321.5 140.5l-2 4M299.5 125.5h6M300.5 122.5l4 6M303.5 123.5l-2 4M308.5 129.5h6M309.5 126.5l4 6M312.5 127.5l-2 4M317.5 133.5h6M318.5 130.5l4 6M321.5 131.5l-2 4M318.5 124.5h6M319.5 121.5l4 6M322.5 122.5l-2 4M318.5 115.5h6M319.5 112.5l4 6M322.5 113.5l-2 4M319.5 106.5h6M320.5 103.5l4 6M323.5 104.5l-2 4M259.5 262.5h5M260.5 260l3 5M255.5 250.5h5M256.5 248l3 5M267.5 300.5h5M268.5 298l3 5M261.5 322.5h5M262.5 320l3 5M283.5 372.5h5M284.5 370l3 5M293.5 388.5h5M294.5 386l3 5M307.5 402.5h5M308.5 400l3 5M271.5 340.5h5M272.5 338l3 5M265.5 284.5h5M266.5 282l3 5" stroke="#786e6e" stroke-width="1" fill="none" shape-rendering="crispEdges"/>
</g>
<g id="colorbar" shape-rendering="crispEdges" opacity="0.999">
<rect x="481" y="15" width="13" height="19" fill="rgb(0,0,0)"/>
<rect x="494" y="15" width="13" height="19" fill="rgb(15,15,15)"/>
<rect x="507" y="15" width="14" height="19" fill="rgb(30,30,30)"/>
<rect x="521" y="15" width="13" height="19" fill="rgb(45,45,45)"/>
<rect x="534" y="15" width="13" height="19" fill="rgb(60,60,60)"/>
<rect x="547" y="15" width="14" height="19" fill="rgb(75,75,75)"/>
<rect x="561" y="15" width="13" height="19" fill="rgb(90,90,90)"/>
<rect x="574" y="15" width="13" height="19" fill="rgb(105,105,105)"/>
<rect x="587" y="15" width="14" height="19" fill="rgb(120,120,120)"/>
<rect x="601" y="15" width="13" height="19" fill="rgb(135,135,135)"/>
<rect x="614" y="15" width="13" height="19" fill="rgb(150,150,150)"/>
<rect x="627" y="15" width="14" height="19" fill="rgb(165,165,165)"/>
<rect x="641" y="15" width="13" height="19" fill="rgb(180,180,180)"/>
<rect x="654" y="15" width="14" height="19" fill="rgb(195,195,195)"/>
<rect x="668" y="15" width="13" height="19" fill="rgb(210,210,210)"/>
<rect x="681" y="15" width="13" height="19" fill="rgb(225,225,225)"/>
<rect x="694" y="15" width="14" height="19" fill="rgb(240,240,240)"/>
<rect x="708" y="15" width="13" height="19" fill="rgb(255,255,255)"/>
<rect x="480" y="12" width="1" height="24" fill="#fff"/>
<rect x="721" y="12" width="1" height="24" fill="#fff"/>
<rect x="528" y="34" width="1" height="3" fill="#fff"/>
<rect x="576" y="34" width="1" height="3" fill="#fff"/>
<rect x="624" y="34" width="1" height="3" fill="#fff"/>
<rect x="672" y="34" width="1" height="3" fill="#fff"/>
</g>
<g id="frames" shape-rendering="crispEdges">
<polygon points="167.5,50.5 278.5,48.5 281.0,134.5 171.5,136.5" fill="none" stroke="#0ff" stroke-width="1"/>
<polygon points="167.5,52.5 279.0,50.0 281.5,137.5 172.0,139.5" fill="none" stroke="#0ff" stroke-width="1"/>
<polygon points="170.5,122.5 281.0,121.5 283.0,207.0 173.0,208.0" fill="none" stroke="#0ff" stroke-width="1"/>
<polygon points="171.5,125.5 281.5,124.5 283.5,208.5 174.0,209.5" fill="none" stroke="#0ff" stroke-width="1"/>
<polygon points="173.0,194.0 283.5,194.5 284.5,278.0 173.0,278.8" fill="none" stroke="#0ff" stroke-width="1"/>
<polygon points="174.0,196.0 283.5,196.5 285.0,280.0 174.0,280.8" fill="none" stroke="#0ff" stroke-width="1"/>
<polygon points="167.0,258.5 275.0,260.0 277.0,344.5 166.0,346.0" fill="none" stroke="#0ff" stroke-width="1"/>
<polygon points="252.4,47.9 365.0,41.0 365.0,126.0 256.0,133.0" fill="none" stroke="#0ff" stroke-width="1"/>
<polygon points="255.0,48.5 367.5,41.0 367.5,127.5 258.6,133.5" fill="none" stroke="#0ff" stroke-width="1"/>
<polygon points="262.4,115.8 370.0,109.5 374.5,192.0 267.4,198.3" fill="none" stroke="#0ff" stroke-width="1"/>
<polygon points="262.4,117.4 370.0,111.0 375.0,193.5 268.0,200.0" fill="none" stroke="#0ff" stroke-width="1"/>
<polygon points="266.6,186.6 373.8,180.0 380.5,257.5 275.2,271.0" fill="none" stroke="#0ff" stroke-width="1"/>
<polygon points="267.0,188.6 374.3,182.0 381.0,259.5 275.7,273.0" fill="none" stroke="#0ff" stroke-width="1"/>
<polygon points="275.7,258.0 379.0,245.5 388.0,327.0 281.0,350.0" fill="none" stroke="#0ff" stroke-width="1"/>
<polygon points="276.0,260.0 379.5,247.5 388.5,329.5 282.5,355.0" fill="none" stroke="#0ff" stroke-width="1"/>
<polygon points="339.6,42.8 454.5,29.0 464.5,110.7 350.0,124.9" fill="none" stroke="#0ff" stroke-width="1"/>
<polygon points="340.0,44.5 455.0,31.0 465.0,112.5 350.5,126.5" fill="none" stroke="#0ff" stroke-width="1"/>
<polygon points="347.5,112.0 462.5,101.5 468.5,180.0 356.5,191.5" fill="none" stroke="#0ff" stroke-width="1"/>
<polygon points="348.0,114.0 463.0,103.5 469.0,182.0 357.0,193.5" fill="none" stroke="#0ff" stroke-width="1"/>
<polygon points="355.5,179.5 467.5,170.0 473.2,250.0 364.5,259.5" fill="none" stroke="#0ff" stroke-width="1"/>
<polygon points="356.0,181.5 468.0,172.0 473.7,252.0 365.0,261.5" fill="none" stroke="#0ff" stroke-width="1"/>
<polygon points="358.3,250.0 464.0,236.6 474.0,320.5 369.0,334.6" fill="none" stroke="#0ff" stroke-width="1"/>
<polygon points="360.7,250.0 467.3,237.5 476.4,319.6 370.7,334.6" fill="none" stroke="#0ff" stroke-width="1"/>
<polygon points="424.6,26.6 534.0,7.5 549.0,89.5 438.3,110.0" fill="none" stroke="#0ff" stroke-width="1"/>
<polygon points="427.3,27.3 531.8,9.2 546.5,90.3 440.9,109.6" fill="none" stroke="#0ff" stroke-width="1"/>
<polygon points="439.9,94.6 581.5,95.8 597.8,188.3 450.5,170.7" fill="none" stroke="#0ff" stroke-width="1"/>
<polygon points="440.0,96.5 582.5,97.5 599.0,190.2 451.0,172.7" fill="none" stroke="#0ff" stroke-width="1"/>
<polygon points="448.3,157.5 595.6,175.0 612.2,266.3 463.2,234.6" fill="none" stroke="#0ff" stroke-width="1"/>
<polygon points="448.8,159.5 597.0,177.5 613.6,268.3 463.7,236.6" fill="none" stroke="#0ff" stroke-width="1"/>
<polygon points="459.0,220.5 609.7,251.7 628.8,343.0 476.2,301.2" fill="none" stroke="#0ff" stroke-width="1"/>
<polygon points="459.5,222.5 611.0,253.8 629.5,344.0 476.4,303.5" fill="none" stroke="#0ff" stroke-width="1"/>
</g>
<g id="axes" shape-rendering="crispEdges" stroke-width="1">
<path d="M215 82h1v1h-1zM216 83h1v1h-1zM217 84h1v1h-1zM218 85h1v1h-1zM219 86h1v1h-1zM220 87h1v1h-1zM221 88h1v1h-1zM222 89h2v1h-2zM224 90h1v1h-1zM225 91h1v1h-1zM226 92h1v1h-1zM227 93h1v1h-1zM228 94h1v1h-1zM229 95h1v1h-1zM230 96h1v1h-1zM231 97h1v1h-1zM232 98h1v1h-1zM233 99h1v1h-1zM234 100h1v1h-1zM235 101h1v1h-1zM236 102h1v1h-1zM237 103h2v1h-2zM239 104h1v1h-1zM240 105h1v1h-1zM241 106h1v1h-1zM242 107h1v1h-1zM243 108h1v1h-1zM244 109h1v1h-1zM245 110h1v1h-1zM246 111h1v1h-1zM247 112h1v1h-1zM248 113h1v1h-1zM249 114h1v1h-1zM250 115h1v1h-1zM251 116h1v1h-1zM252 117h1v1h-1zM253 118h2v1h-2zM255 119h1v1h-1zM256 120h1v1h-1zM257 121h1v1h-1zM258 122h1v1h-1zM259 123h1v1h-1zM260 124h1v1h-1zM261 125h1v1h-1zM262 126h1v1h-1zM263 127h1v1h-1zM264 128h1v1h-1zM265 129h1v1h-1zM266 130h1v1h-1zM267 131h1v1h-1zM268 132h2v1h-2zM270 133h1v1h-1zM271 134h1v1h-1zM272 135h1v1h-1zM273 136h1v1h-1zM274 137h1v1h-1zM275 138h1v1h-1zM276 139h1v1h-1zM277 140h1v1h-1zM278 141h1v1h-1zM279 142h1v1h-1zM280 143h1v1h-1zM281 144h1v1h-1zM282 145h1v1h-1zM283 146h2v1h-2zM285 147h1v1h-1zM286 148h1v1h-1zM287 149h1v1h-1zM288 150h1v1h-1zM289 151h1v1h-1zM290 152h1v1h-1zM291 153h1v1h-1zM292 154h1v1h-1zM293 155h1v1h-1zM294 156h1v1h-1zM295 157h1v1h-1zM296 158h1v1h-1zM297 159h1v1h-1zM298 160h2v1h-2zM300 161h1v1h-1zM301 162h1v1h-1zM302 163h1v1h-1zM303 164h1v1h-1zM304 165h1v1h-1zM305 166h1v1h-1zM306 167h1v1h-1zM307 168h1v1h-1zM308 169h1v1h-1zM309 170h1v1h-1zM310 171h1v1h-1zM311 172h1v1h-1zM312 173h1v1h-1zM313 174h2v1h-2zM315 175h1v1h-1zM316 176h1v1h-1zM317 177h1v1h-1zM318 178h1v1h-1zM319 179h1v1h-1zM320 180h1v1h-1zM321 181h1v1h-1zM322 182h1v1h-1zM323 183h1v1h-1zM324 184h1v1h-1zM325 185h1v1h-1zM326 186h1v1h-1zM327 187h1v1h-1zM328 188h2v1h-2zM330 189h1v1h-1zM331 190h1v1h-1zM332 191h1v1h-1zM333 192h1v1h-1zM334 193h1v1h-1zM335 194h1v1h-1zM336 195h1v1h-1zM337 196h1v1h-1zM338 197h1v1h-1zM339 198h1v1h-1zM340 199h1v1h-1zM341 200h1v1h-1zM342 201h1v1h-1zM343 202h1v1h-1zM344 203h2v1h-2zM346 204h1v1h-1zM347 205h1v1h-1zM348 206h1v1h-1zM349 207h1v1h-1zM350 208h1v1h-1zM351 209h1v1h-1zM352 210h1v1h-1zM353 211h1v1h-1zM354 212h1v1h-1zM355 213h1v1h-1zM356 214h1v1h-1zM357 215h1v1h-1zM358 216h1v1h-1zM359 217h2v1h-2zM361 218h1v1h-1zM362 219h1v1h-1zM363 220h1v1h-1zM364 221h1v1h-1zM365 222h1v1h-1zM366 223h1v1h-1zM367 224h1v1h-1zM368 225h1v1h-1zM369 226h1v1h-1zM370 227h1v1h-1zM371 228h1v1h-1zM372 229h1v1h-1zM373 230h1v1h-1zM374 231h2v1h-2zM376 232h1v1h-1zM377 233h1v1h-1zM378 234h1v1h-1zM379 235h1v1h-1zM380 236h1v1h-1zM381 237h1v1h-1zM382 238h1v1h-1zM383 239h1v1h-1zM384 240h1v1h-1zM385 241h1v1h-1zM386 242h1v1h-1zM387 243h1v1h-1zM388 244h1v1h-1zM389 245h2v1h-2zM391 246h1v1h-1zM392 247h1v1h-1zM393 248h1v1h-1zM394 249h1v1h-1zM395 250h1v1h-1zM396 251h1v1h-1zM397 252h1v1h-1zM398 253h1v1h-1zM399 254h1v1h-1zM400 255h1v1h-1zM401 256h1v1h-1zM402 257h1v1h-1zM403 258h1v1h-1zM404 259h1v1h-1zM405 260h2v1h-2zM407 261h1v1h-1zM408 262h1v1h-1zM409 263h1v1h-1zM410 264h1v1h-1zM411 265h1v1h-1zM412 266h1v1h-1zM413 267h1v1h-1zM414 268h1v1h-1zM415 269h1v1h-1zM416 270h1v1h-1zM417 271h1v1h-1zM418 272h1v1h-1zM419 273h1v1h-1zM420 274h2v1h-2zM422 275h1v1h-1zM423 276h1v1h-1zM424 277h1v1h-1zM425 278h1v1h-1zM426 279h1v1h-1zM427 280h1v1h-1zM428 281h1v1h-1zM429 282h1v1h-1zM430 283h1v1h-1zM431 284h1v1h-1zM432 285h1v1h-1zM433 286h1v1h-1zM434 287h1v1h-1zM435 288h2v1h-2zM437 289h1v1h-1zM438 290h1v1h-1zM439 291h1v1h-1zM440 292h1v1h-1zM441 293h1v1h-1zM442 294h1v1h-1zM443 295h1v1h-1zM444 296h1v1h-1zM445 297h1v1h-1zM446 298h1v1h-1zM447 299h1v1h-1zM448 300h1v1h-1zM449 301h1v1h-1zM450 302h2v1h-2zM452 303h1v1h-1zM453 304h1v1h-1zM454 305h1v1h-1zM455 306h1v1h-1zM456 307h1v1h-1zM457 308h1v1h-1zM458 309h1v1h-1zM459 310h1v1h-1zM460 311h1v1h-1zM461 312h1v1h-1zM462 313h1v1h-1zM463 314h1v1h-1zM464 315h1v1h-1zM465 316h2v1h-2zM467 317h1v1h-1zM468 318h1v1h-1zM469 319h1v1h-1zM470 320h1v1h-1zM471 321h1v1h-1zM472 322h1v1h-1zM473 323h1v1h-1zM474 324h1v1h-1zM475 325h1v1h-1zM476 326h1v1h-1zM477 327h1v1h-1zM478 328h1v1h-1zM479 329h1v1h-1zM480 330h2v1h-2zM482 331h1v1h-1zM483 332h1v1h-1zM484 333h1v1h-1zM485 334h1v1h-1zM486 335h1v1h-1zM487 336h1v1h-1zM488 337h1v1h-1zM489 338h1v1h-1zM490 339h1v1h-1zM491 340h1v1h-1zM492 341h1v1h-1zM493 342h1v1h-1zM494 343h1v1h-1zM495 344h1v1h-1zM496 345h2v1h-2zM498 346h1v1h-1zM499 347h1v1h-1zM500 348h1v1h-1zM501 349h1v1h-1zM502 350h1v1h-1zM503 351h1v1h-1zM504 352h1v1h-1zM505 353h1v1h-1zM506 354h1v1h-1zM507 355h1v1h-1zM508 356h1v1h-1zM509 357h1v1h-1zM510 358h1v1h-1zM511 359h2v1h-2zM513 360h1v1h-1zM514 361h1v1h-1zM515 362h1v1h-1zM516 363h1v1h-1zM517 364h1v1h-1zM518 365h1v1h-1zM519 366h1v1h-1z" fill="#f00"/>
<path d="M215 82h1v1h-1zM216 81h1v1h-1zM216 80h1v1h-1zM217 79h1v1h-1zM217 78h1v1h-1zM218 77h1v1h-1zM218 76h1v1h-1zM219 75h1v1h-1zM219 74h1v1h-1zM220 73h1v1h-1zM221 72h1v1h-1zM221 71h1v1h-1zM222 70h1v1h-1zM222 69h1v1h-1zM223 68h1v1h-1zM223 67h1v1h-1zM224 66h1v1h-1zM225 65h1v1h-1zM225 64h1v1h-1zM226 63h1v1h-1zM226 62h1v1h-1zM227 61h1v1h-1zM227 60h1v1h-1zM228 59h1v1h-1zM228 58h1v1h-1zM229 57h1v1h-1zM230 56h1v1h-1zM230 55h1v1h-1zM231 54h1v1h-1zM231 53h1v1h-1zM232 52h1v1h-1zM232 51h1v1h-1zM233 50h1v1h-1zM234 49h1v1h-1zM234 48h1v1h-1zM235 47h1v1h-1zM235 46h1v1h-1zM236 45h1v1h-1zM236 44h1v1h-1zM237 43h1v1h-1zM237 42h1v1h-1zM238 41h1v1h-1zM239 40h1v1h-1zM239 39h1v1h-1zM240 38h1v1h-1zM240 37h1v1h-1zM241 36h1v1h-1zM241 35h1v1h-1zM242 34h1v1h-1zM242 33h1v1h-1zM243 32h1v1h-1zM244 31h1v1h-1zM244 30h1v1h-1zM245 29h1v1h-1zM245 28h1v1h-1zM246 27h1v1h-1zM246 26h1v1h-1zM247 25h1v1h-1zM248 24h1v1h-1zM248 23h1v1h-1zM249 22h1v1h-1zM249 21h1v1h-1zM250 20h1v1h-1zM250 19h1v1h-1zM251 18h1v1h-1zM251 17h1v1h-1zM252 16h1v1h-1zM253 15h1v1h-1zM253 14h1v1h-1zM254 13h1v1h-1zM254 12h1v1h-1zM255 11h1v1h-1zM255 10h1v1h-1zM256 9h1v1h-1zM257 8h1v1h-1zM257 7h1v1h-1zM258 6h1v1h-1zM258 5h1v1h-1zM259 4h1v1h-1zM259 3h1v1h-1zM260 2h1v1h-1zM260 1h1v1h-1zM261 0h1v1h-1z" fill="#0f0"/>
<path d="M211 82h5v1h-5zM203 81h8v1h-8zM195 80h8v1h-8zM187 79h8v1h-8zM178 78h9v1h-9zM170 77h8v1h-8zM162 76h8v1h-8zM154 75h8v1h-8zM145 74h9v1h-9zM137 73h8v1h-8zM129 72h8v1h-8zM120 71h9v1h-9zM112 70h8v1h-8zM104 69h8v1h-8zM96 68h8v1h-8zM91 67h5v1h-5z" fill="#00f"/>
</g>
<g id="lastframe" shape-rendering="crispEdges">
<polygon points="163.5,258.5 275.0,260.0 277.0,344.5 162.5,346.5" fill="none" stroke="#ff0" stroke-width="1"/>
<polygon points="163.5,258.5 275.0,260.0 277.0,344.5 162.5,346.5" fill="none" stroke="#f0f" stroke-width="1" stroke-dasharray="4 4"/>
</g>
<g id="scalebar" shape-rendering="crispEdges" opacity="0.999">
<rect x="0" y="399" width="116" height="24" fill="#fff"/>
<rect x="1" y="400" width="22" height="11" fill="#000"/>
<rect x="46" y="400" width="24" height="11" fill="#000"/>
<rect x="93" y="400" width="22" height="11" fill="#000"/>
<rect x="23" y="411" width="23" height="11" fill="#000"/>
<rect x="70" y="411" width="23" height="11" fill="#000"/>
</g>
<g id="labels" opacity="0.999">
<text transform="translate(527.5,48.3) scale(1,1.21)" class="t">0.2</text>
<text transform="translate(575.5,48.3) scale(1,1.21)" class="t">0.4</text>
<text transform="translate(623.5,48.3) scale(1,1.21)" class="t">0.6</text>
<text transform="translate(671.5,48.3) scale(1,1.21)" class="t">0.8</text>
<text transform="translate(479.5,12.0) scale(1,1.21)" class="t">0</text>
<text transform="translate(714.8,11.6) scale(1,1.21)" class="t">1</text>
<text transform="translate(57,397.1) scale(1,1.21)" class="t" text-anchor="middle">5 km</text>
<text transform="translate(122.7,421) scale(1,1.21)" class="t">MSI:  2000-271T09:10:00.00 to 2000-271T09:25:32.00 (6/0145456032 to 6/0145456964)</text>
<text transform="translate(6.6,443.8) scale(1,1.21)" class="t">MSI_RegGlobal_271c</text>
<text transform="translate(6.6,457.7) scale(1,1.21)" class="t">This is a clean, 4x4_3 mosaic. Starts in lower right corner.</text>
<text transform="translate(6.6,471.4) scale(1,1.21)" class="t">Red frame is last frame of mosaic.</text>
</g>
</svg>
</body></html>
